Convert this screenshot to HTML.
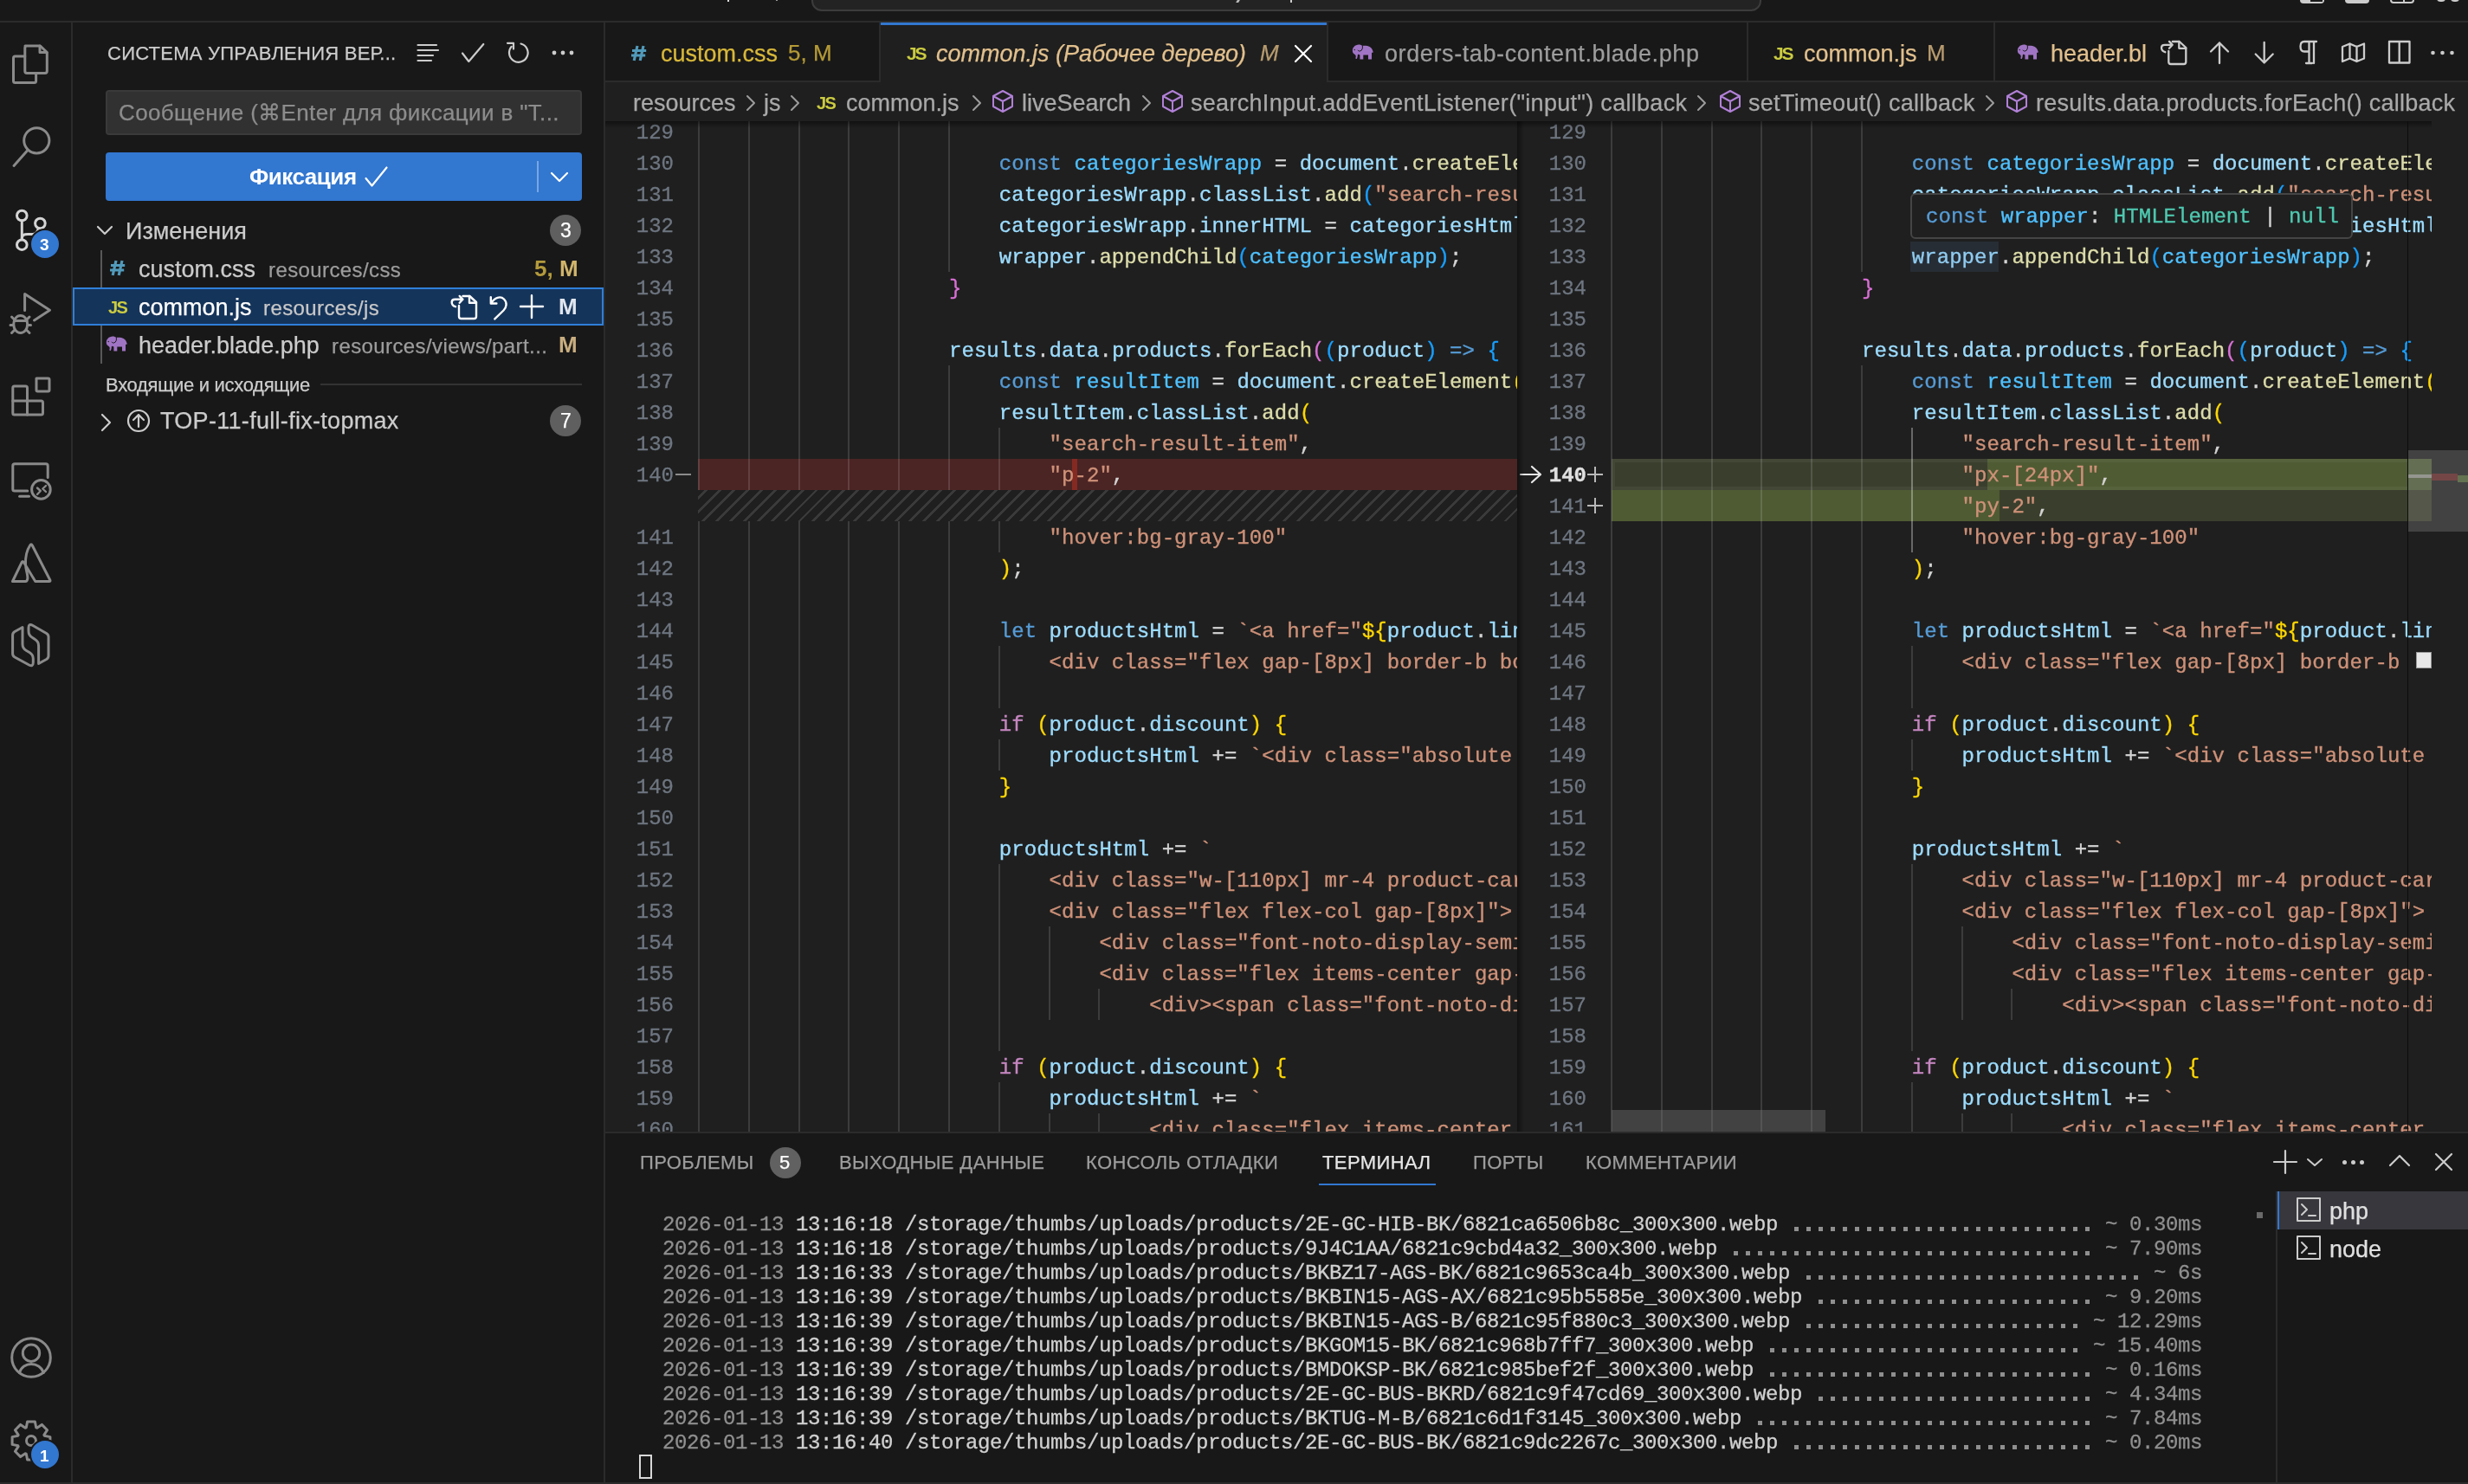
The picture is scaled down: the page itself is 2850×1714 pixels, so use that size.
<!DOCTYPE html><html><head><meta charset="utf-8"><style>
html,body{margin:0;padding:0;width:2850px;height:1714px;overflow:hidden;background:#181818;}
*{box-sizing:border-box;}
.c{position:absolute;overflow:hidden;}
</style></head><body><div style="position:absolute;left:0;top:0;width:2850px;height:1714px;overflow:hidden;background:#181818;will-change:transform;">
<div style="position:absolute;left:0px;top:0px;width:2850px;height:24px;background:#181818;"></div>
<div style="position:absolute;left:0px;top:24px;width:2850px;height:2px;background:#2b2b2b;"></div>
<div style="position:absolute;left:937px;top:-20px;width:1097px;height:33px;background:#232323;border:2px solid #3c3c3c;border-radius:12px;"></div>
<div style="position:absolute;left:1428px;top:0px;width:3px;height:3px;background:#bbbbbb;transform:skewX(-30deg);"></div>
<div style="position:absolute;left:1490px;top:0px;width:2px;height:3px;background:#cccccc;"></div>
<div style="position:absolute;left:840px;top:0px;width:2px;height:2px;background:#dddddd;"></div>
<div style="position:absolute;left:896px;top:0px;width:2px;height:1px;background:#999999;"></div>
<div style="position:absolute;left:2656px;top:-20px;width:28px;height:24px;background:#cccccc;border-radius:4px;"></div>
<div style="position:absolute;left:2668px;top:-20px;width:14px;height:21.5px;background:#181818;"></div>
<div style="position:absolute;left:2708px;top:-20px;width:28px;height:24px;background:#cccccc;border-radius:4px;"></div>
<div style="position:absolute;left:2760px;top:-20px;width:28px;height:24px;background:transparent;border:2px solid #cccccc;border-radius:4px;"></div>
<div style="position:absolute;left:2775px;top:-20px;width:2px;height:22px;background:#cccccc;"></div>
<div style="position:absolute;left:2814px;top:-6px;width:10px;height:8px;background:#cccccc;border-radius:4px;"></div>
<div style="position:absolute;left:2830px;top:-6px;width:10px;height:8px;background:#cccccc;border-radius:4px;"></div>
<div style="position:absolute;left:0px;top:26px;width:82px;height:1686px;background:#181818;"></div>
<div style="position:absolute;left:82px;top:26px;width:2px;height:1686px;background:#2b2b2b;"></div>
<svg style="position:absolute;left:0px;top:30px" width="82" height="80" viewBox="0 30 82 80"><path d="M29 53 H46.5 L54.3 60.5 V82 Q54.3 84.4 52 84.4 H31 Q28.8 84.4 28.8 82 V55.5 Q28.8 53 31 53 Z" fill="none" stroke="#8a8a8a" stroke-width="3.0" stroke-linejoin="round" stroke-linecap="round" /><path d="M46 53 V60.5 H54" fill="none" stroke="#8a8a8a" stroke-width="3.0" stroke-linejoin="round" stroke-linecap="round" /><path d="M28.8 65 H17.5 Q15.5 65 15.5 67 V93.5 Q15.5 95.6 17.5 95.6 H39.5 Q41.6 95.6 41.6 93.5 V84.4" fill="none" stroke="#8a8a8a" stroke-width="3.0" stroke-linejoin="round" stroke-linecap="round" /></svg>
<svg style="position:absolute;left:0px;top:130px" width="82" height="80" viewBox="0 130 82 80"><path d="M42.3 162.3 m-14.6 0 a14.6 14.6 0 1 0 29.2 0 a14.6 14.6 0 1 0 -29.2 0" fill="none" stroke="#8a8a8a" stroke-width="3.0" stroke-linejoin="round" stroke-linecap="round" /><path d="M31.5 174 L16 191.5" fill="none" stroke="#8a8a8a" stroke-width="3.0" stroke-linejoin="round" stroke-linecap="round" stroke-linecap="butt"/></svg>
<svg style="position:absolute;left:0px;top:225px" width="82" height="80" viewBox="0 225 82 80"><path d="M25.3 249 m-5.8 0 a5.8 5.8 0 1 0 11.6 0 a5.8 5.8 0 1 0 -11.6 0" fill="none" stroke="#d4d4d4" stroke-width="3.0" stroke-linejoin="round" stroke-linecap="round" /><path d="M46.4 258 m-5.8 0 a5.8 5.8 0 1 0 11.6 0 a5.8 5.8 0 1 0 -11.6 0" fill="none" stroke="#d4d4d4" stroke-width="3.0" stroke-linejoin="round" stroke-linecap="round" /><path d="M25.3 282.7 m-5.8 0 a5.8 5.8 0 1 0 11.6 0 a5.8 5.8 0 1 0 -11.6 0" fill="none" stroke="#d4d4d4" stroke-width="3.0" stroke-linejoin="round" stroke-linecap="round" /><path d="M25.3 255 V276.5" fill="none" stroke="#d4d4d4" stroke-width="3.0" stroke-linejoin="round" stroke-linecap="round" /><path d="M25.3 276 C25.3 271 28 270.5 32 270.5 H38 C41 270.5 43 269 44.5 263.5" fill="none" stroke="#d4d4d4" stroke-width="3.0" stroke-linejoin="round" stroke-linecap="round" /></svg>
<div style="position:absolute;left:34px;top:264px;width:36px;height:36px;border-radius:18px;background:#3277d0;border:2px solid #181818;"></div>
<div style="position:absolute;left:46px;top:270.91px;height:23px;line-height:23px;font-family:'Liberation Sans', sans-serif;font-size:19px;color:#ffffff;font-weight:700;white-space:pre;-webkit-text-stroke:0px;">3</div>
<svg style="position:absolute;left:0px;top:320px" width="82" height="80" viewBox="0 320 82 80"><path d="M28.6 358.5 V339.5 L57.5 358.3 L39.5 370" fill="none" stroke="#8a8a8a" stroke-width="3.0" stroke-linejoin="round" stroke-linecap="round" stroke-linecap="butt"/><path d="M23.7 374.5 m-8 0 a8 10 0 1 0 16 0 a8 10 0 1 0 -16 0" fill="none" stroke="#8a8a8a" stroke-width="3.0" stroke-linejoin="round" stroke-linecap="round" /><path d="M16.5 370.5 H31 M13.5 366 L17 369.5 M34 366 L30.5 369.5 M12 375.5 H15.5 M32 375.5 H35.5 M13.5 384.5 L17 381 M34 384.5 L30.5 381" fill="none" stroke="#8a8a8a" stroke-width="3.0" stroke-linejoin="round" stroke-linecap="round" stroke-linecap="butt"/></svg>
<svg style="position:absolute;left:0px;top:420px" width="82" height="80" viewBox="0 420 82 80"><path d="M42 437 H55.5 Q57 437 57 438.5 V450.5 Q57 452 55.5 452 H43.5 Q42 452 42 450.5 Z" fill="none" stroke="#8a8a8a" stroke-width="3.0" stroke-linejoin="round" stroke-linecap="round" /><path d="M16.5 446 H29.5 Q31.5 446 31.5 448 V463 H47.5 Q49.5 463 49.5 465 V477 Q49.5 479 47.5 479 H16.5 Q14.8 479 14.8 477 V448 Q14.8 446 16.5 446 Z" fill="none" stroke="#8a8a8a" stroke-width="3.0" stroke-linejoin="round" stroke-linecap="round" /><path d="M14.8 463 H31.5 V479" fill="none" stroke="#8a8a8a" stroke-width="3.0" stroke-linejoin="round" stroke-linecap="round" /></svg>
<svg style="position:absolute;left:0px;top:515px" width="82" height="80" viewBox="0 515 82 80"><path d="M31.8 567 H17 Q14.8 567 14.8 565 V538 Q14.8 535.8 17 535.8 H53 Q55.2 535.8 55.2 538 V551.5" fill="none" stroke="#8a8a8a" stroke-width="3.0" stroke-linejoin="round" stroke-linecap="round" stroke-linecap="butt"/><path d="M22.6 573.2 H33.5" fill="none" stroke="#8a8a8a" stroke-width="3.0" stroke-linejoin="round" stroke-linecap="round" stroke-linecap="butt"/><path d="M47.4 565.4 m-10.8 0 a10.8 10.8 0 1 0 21.6 0 a10.8 10.8 0 1 0 -21.6 0" fill="none" stroke="#8a8a8a" stroke-width="3.0" stroke-linejoin="round" stroke-linecap="round" /><path d="M43 563.5 L46.8 567 L43 571 M53 561 L49.3 564.5 L53 568" fill="none" stroke="#8a8a8a" stroke-width="2.4" stroke-linejoin="round" stroke-linecap="round" stroke-linecap="butt"/></svg>
<svg style="position:absolute;left:0px;top:610px" width="82" height="80" viewBox="0 610 82 80"><path d="M14.5 671.5 L25.2 649.3 Q26.2 647.5 27.3 649.3 L40.8 671.5 H56.8 Q58.5 671.5 57.8 670 L37.3 630 Q36 627.5 34.6 630 C30 637 29.2 644 29.5 652 C29.8 659 32.5 664 31.8 668.5 Q31.3 671.5 29.5 671.5 Z" fill="none" stroke="#8a8a8a" stroke-width="3.0" stroke-linejoin="round" stroke-linecap="round" /></svg>
<svg style="position:absolute;left:0px;top:705px" width="82" height="80" viewBox="0 705 82 80"><path d="M26 724.5 L17 729.5 Q14.6 731 14.6 733.5 V755 Q14.6 757.5 17 759 L33.5 768 Q38.3 770.5 38.3 765 V761 Q38.3 756 34 753.5 L30.5 751.5 Q26 749 26 744 Z" fill="none" stroke="#8a8a8a" stroke-width="3.0" stroke-linejoin="round" stroke-linecap="round" /><path d="M44.6 766.5 L53.6 761.5 Q56 760 56 757.5 V735.5 Q56 733 53.6 731.5 L38 722.5 Q33 719.5 33 725 V729 Q33 734 37.5 736.5 L40.5 738.5 Q44.6 741 44.6 746 Z" fill="none" stroke="#8a8a8a" stroke-width="3.0" stroke-linejoin="round" stroke-linecap="round" /></svg>
<svg style="position:absolute;left:0px;top:1530px" width="82" height="80" viewBox="0 1530 82 80"><path d="M36 1568 m-22.3 0 a22.3 22.3 0 1 0 44.6 0 a22.3 22.3 0 1 0 -44.6 0" fill="none" stroke="#8a8a8a" stroke-width="3.0" stroke-linejoin="round" stroke-linecap="round" /><path d="M36 1562.7 m-9.7 0 a9.7 9.7 0 1 0 19.4 0 a9.7 9.7 0 1 0 -19.4 0" fill="none" stroke="#8a8a8a" stroke-width="3.0" stroke-linejoin="round" stroke-linecap="round" /><path d="M22.4 1585.5 C26 1572 46 1572 50.3 1585.5" fill="none" stroke="#8a8a8a" stroke-width="3.0" stroke-linejoin="round" stroke-linecap="round" /></svg>
<svg style="position:absolute;left:0px;top:1630px" width="82" height="80" viewBox="0 1630 82 80"><path d="M30.3 1648.8 L31.6 1642.1 L40.4 1642.1 L41.7 1648.8 L42.7 1649.2 L48.3 1645.4 L54.6 1651.7 L50.8 1657.3 L51.2 1658.3 L57.9 1659.6 L57.9 1668.4 L51.2 1669.7 L50.8 1670.7 L54.6 1676.3 L48.3 1682.6 L42.7 1678.8 L41.7 1679.2 L40.4 1685.9 L31.6 1685.9 L30.3 1679.2 L29.3 1678.8 L23.7 1682.6 L17.4 1676.3 L21.2 1670.7 L20.8 1669.7 L14.1 1668.4 L14.1 1659.6 L20.8 1658.3 L21.2 1657.3 L17.4 1651.7 L23.7 1645.4 L29.3 1649.2 Z" fill="none" stroke="#8a8a8a" stroke-width="3.0" stroke-linejoin="round" stroke-linecap="round" /><path d="M36 1664 m-5.5 0 a5.5 5.5 0 1 0 11 0 a5.5 5.5 0 1 0 -11 0" fill="none" stroke="#8a8a8a" stroke-width="3.0" stroke-linejoin="round" stroke-linecap="round" /></svg>
<div style="position:absolute;left:34px;top:1662px;width:36px;height:36px;border-radius:18px;background:#3277d0;border:2px solid #181818;"></div>
<div style="position:absolute;left:46px;top:1669.91px;height:23px;line-height:23px;font-family:'Liberation Sans', sans-serif;font-size:19px;color:#ffffff;font-weight:700;white-space:pre;-webkit-text-stroke:0px;">1</div>
<div style="position:absolute;left:84px;top:26px;width:613px;height:1686px;background:#181818;"></div>
<div style="position:absolute;left:697px;top:26px;width:2px;height:1686px;background:#2b2b2b;"></div>
<div style="position:absolute;left:124px;top:49.37px;height:26px;line-height:26px;font-family:'Liberation Sans', sans-serif;font-size:22px;color:#cccccc;font-weight:400;white-space:pre;-webkit-text-stroke:0.25px;letter-spacing:0.25px;">СИСТЕМА УПРАВЛЕНИЯ ВЕР...</div>
<svg style="position:absolute;left:470px;top:40px" width="200" height="45" viewBox="470 40 200 45"><path d="M482.5 52 H504 M482.5 58 H506 M482.5 64 H500 M482.5 70 H498" fill="none" stroke="#cccccc" stroke-width="2.2" stroke-linejoin="round" stroke-linecap="round" stroke-linecap="butt"/><path d="M534 61.5 L541.3 71 L558.3 51" fill="none" stroke="#cccccc" stroke-width="2.2" stroke-linejoin="round" stroke-linecap="round" stroke-linecap="butt"/><path d="M601.5 50.5 A10.8 10.8 0 1 1 590.7 53.8" fill="none" stroke="#cccccc" stroke-width="2.2" stroke-linejoin="round" stroke-linecap="round" stroke-linecap="butt"/><path d="M586 49.8 H593 V56.6" fill="none" stroke="#cccccc" stroke-width="2.2" stroke-linejoin="round" stroke-linecap="round" stroke-linecap="butt"/><circle cx="640" cy="61" r="2.4" fill="#cccccc"/><circle cx="650" cy="61" r="2.4" fill="#cccccc"/><circle cx="660" cy="61" r="2.4" fill="#cccccc"/></svg>
<div style="position:absolute;left:122px;top:104px;width:550px;height:52px;background:#313131;border-radius:4px;border:2px solid #3a3a3a;"></div>
<div style="position:absolute;left:137px;top:115.48px;height:31px;line-height:31px;font-family:'Liberation Sans', sans-serif;font-size:26px;color:#8c8c8c;font-weight:400;white-space:pre;-webkit-text-stroke:0.25px;letter-spacing:0.35px;">Сообщение (⌘Enter для фиксации в "T...</div>
<div style="position:absolute;left:122px;top:176px;width:550px;height:56px;background:#3277d0;border-radius:4px;"></div>
<div style="position:absolute;left:288px;top:189.48px;height:31px;line-height:31px;font-family:'Liberation Sans', sans-serif;font-size:26px;color:#ffffff;font-weight:700;white-space:pre;-webkit-text-stroke:0px;letter-spacing:-0.45px;">Фиксация</div>
<svg style="position:absolute;left:415px;top:185px" width="40" height="40" viewBox="415 185 40 40"><path d="M422.5 206 L429.5 214.5 L446.5 193.5" fill="none" stroke="#ffffff" stroke-width="2.2" stroke-linejoin="round" stroke-linecap="round" stroke-linecap="butt"/></svg>
<div style="position:absolute;left:620px;top:186px;width:2px;height:36px;background:#7aa6e2;"></div>
<svg style="position:absolute;left:634px;top:196px;" width="26" height="18" viewBox="0 0 26 18"><path d="M3 4 L12 13 L21 4" fill="none" stroke="#ffffff" stroke-width="2.2" stroke-linejoin="round" stroke-linecap="round" /></svg>
<svg style="position:absolute;left:110px;top:258px;" width="24" height="18" viewBox="0 0 24 18"><path d="M3 4 L11 12 L19 4" fill="none" stroke="#cccccc" stroke-width="2.2" stroke-linejoin="round" stroke-linecap="round" /></svg>
<div style="position:absolute;left:145px;top:250.64px;height:32px;line-height:32px;font-family:'Liberation Sans', sans-serif;font-size:27px;color:#cccccc;font-weight:400;white-space:pre;-webkit-text-stroke:0.25px;">Изменения</div>
<div style="position:absolute;left:635px;top:248px;width:36px;height:36px;border-radius:18px;background:#5f5f5f;"></div>
<div style="position:absolute;left:647px;top:251.52px;height:28px;line-height:28px;font-family:'Liberation Sans', sans-serif;font-size:23px;color:#ffffff;font-weight:400;white-space:pre;-webkit-text-stroke:0.25px;">3</div>
<div style="position:absolute;left:116px;top:289px;width:2px;height:131px;background:#585858;"></div>
<svg style="position:absolute;left:124px;top:298px" width="24" height="24" viewBox="124 298 24 24"><path d="M134.0 301L130.2 318 M141.0 301L137.2 318 M128.0 306.5H144.2 M127.0 312H143.2" stroke="#519aba" stroke-width="3.2" fill="none"/></svg>
<div style="position:absolute;left:160px;top:294.64px;height:32px;line-height:32px;font-family:'Liberation Sans', sans-serif;font-size:27px;color:#cccccc;font-weight:400;white-space:pre;-webkit-text-stroke:0.25px;">custom.css</div>
<div style="position:absolute;left:310px;top:297.18px;height:29px;line-height:29px;font-family:'Liberation Sans', sans-serif;font-size:24px;color:#9d9d9d;font-weight:400;white-space:pre;-webkit-text-stroke:0.25px;letter-spacing:0.4px;">resources/css</div>
<div style="position:absolute;left:617px;top:295.48px;height:31px;line-height:31px;font-family:'Liberation Sans', sans-serif;font-size:26px;color:#b39a3c;font-weight:700;white-space:pre;-webkit-text-stroke:0px;">5, <span style="color:#d0b46a">M</span></div>
<div style="position:absolute;left:84px;top:332px;width:613px;height:44px;background:#15345a;border:2px solid #2f7fd8;"></div>
<div style="position:absolute;left:125px;top:343.06px;height:24px;line-height:24px;font-family:'Liberation Sans', sans-serif;font-size:20px;color:#cbcb41;font-weight:700;white-space:pre;-webkit-text-stroke:0px;letter-spacing:-1.6px;">JS</div>
<div style="position:absolute;left:160px;top:338.64px;height:32px;line-height:32px;font-family:'Liberation Sans', sans-serif;font-size:27px;color:#ffffff;font-weight:400;white-space:pre;-webkit-text-stroke:0.25px;">common.js</div>
<div style="position:absolute;left:304px;top:341.18px;height:29px;line-height:29px;font-family:'Liberation Sans', sans-serif;font-size:24px;color:#c8c8c8;font-weight:400;white-space:pre;-webkit-text-stroke:0.25px;letter-spacing:0.4px;">resources/js</div>
<svg style="position:absolute;left:510px;top:335px" width="170" height="40" viewBox="510 335 170 40"><path d="M530 353 V365.5 Q530 368 532.5 368 H547.5 Q550 368 550 365.5 V349 L542.4 342 H534.5" fill="none" stroke="#ffffff" stroke-width="2.4" stroke-linejoin="round" stroke-linecap="round" stroke-linecap="butt"/><path d="M542 342 V349.8 H550" fill="none" stroke="#ffffff" stroke-width="2.4" stroke-linejoin="round" stroke-linecap="round" stroke-linecap="butt"/><path d="M526 354.2 Q521.7 353 521.7 349 Q521.7 345.8 525.5 345.8 H534.4 M530.7 341.9 L534.4 345.8 L530.7 349.8" fill="none" stroke="#ffffff" stroke-width="2.4" stroke-linejoin="round" stroke-linecap="round" stroke-linecap="butt"/><path d="M566.8 343.3 V350.5 H573.4" fill="none" stroke="#ffffff" stroke-width="2.4" stroke-linejoin="round" stroke-linecap="round" stroke-linecap="butt"/><path d="M567.5 350 C571 343.5 578 341.5 582 345.5 C586 349.5 585 355 581.5 358.5 L571.3 368.4" fill="none" stroke="#ffffff" stroke-width="2.4" stroke-linejoin="round" stroke-linecap="round" stroke-linecap="butt"/><path d="M614 341.2 V367 M601 354 H627" fill="none" stroke="#ffffff" stroke-width="2.4" stroke-linejoin="round" stroke-linecap="round" stroke-linecap="butt"/></svg>
<div style="position:absolute;left:645px;top:339.48px;height:31px;line-height:31px;font-family:'Liberation Sans', sans-serif;font-size:26px;color:#e0e6ee;font-weight:700;white-space:pre;-webkit-text-stroke:0px;">M</div>
<svg style="position:absolute;left:122px;top:388px;" width="26" height="19" viewBox="0 0 26 19"><path d="M1 9 C0 4 4 0.5 8 0.5 C10 0.5 11.5 1.2 12.3 2 C13.5 1.6 16 1.6 18 2 C22 2.8 24 6 24.5 8.5 L25 9.3 L23 10 V17.4 H19 V12.6 C17 12.3 15 12.3 13.3 12.6 V17.4 H9.4 V12.5 C8.5 12.2 7.5 11.5 7 12 C6.5 13 7 14.5 6 16.5 C5.5 17.5 4 17 4.5 15.5 C5 14 5 13 3 11.5 C2 10.8 1.3 10.3 1 9 Z" fill="#a074c4"/><path d="M12.3 2 C12.8 4.5 12 7.5 9.5 8 C8.5 8.2 7.5 7.6 6.8 6.8" fill="none" stroke="#181818" stroke-width="1"/><circle cx="3.2" cy="6.5" r="0.7" fill="#181818"/></svg>
<div style="position:absolute;left:160px;top:382.64px;height:32px;line-height:32px;font-family:'Liberation Sans', sans-serif;font-size:27px;color:#cccccc;font-weight:400;white-space:pre;-webkit-text-stroke:0.25px;">header.blade.php</div>
<div style="position:absolute;left:383px;top:385.18px;height:29px;line-height:29px;font-family:'Liberation Sans', sans-serif;font-size:24px;color:#9d9d9d;font-weight:400;white-space:pre;-webkit-text-stroke:0.25px;letter-spacing:0.4px;">resources/views/part...</div>
<div style="position:absolute;left:645px;top:383.48px;height:31px;line-height:31px;font-family:'Liberation Sans', sans-serif;font-size:26px;color:#c8ad7f;font-weight:700;white-space:pre;-webkit-text-stroke:0px;">M</div>
<div style="position:absolute;left:122px;top:432.37px;height:26px;line-height:26px;font-family:'Liberation Sans', sans-serif;font-size:22px;color:#cccccc;font-weight:400;white-space:pre;-webkit-text-stroke:0.25px;letter-spacing:-0.3px;">Входящие и исходящие</div>
<div style="position:absolute;left:370px;top:443px;width:302px;height:2px;background:#333333;"></div>
<svg style="position:absolute;left:114px;top:476px;" width="18" height="24" viewBox="0 0 18 24"><path d="M4 3 L13 12 L4 21" fill="none" stroke="#cccccc" stroke-width="2.2" stroke-linejoin="round" stroke-linecap="round" /></svg>
<svg style="position:absolute;left:146px;top:472px;" width="28" height="28" viewBox="0 0 28 28"><path d="M14 14 m-12 0 a12 12 0 1 0 24 0 a12 12 0 1 0 -24 0" fill="none" stroke="#cccccc" stroke-width="2.2" stroke-linejoin="round" stroke-linecap="round" /><path d="M14 21 V8 M8 13 L14 7 L20 13" fill="none" stroke="#cccccc" stroke-width="2.2" stroke-linejoin="round" stroke-linecap="round" /></svg>
<div style="position:absolute;left:185px;top:469.64px;height:32px;line-height:32px;font-family:'Liberation Sans', sans-serif;font-size:27px;color:#cccccc;font-weight:400;white-space:pre;-webkit-text-stroke:0.25px;letter-spacing:0.3px;">TOP-11-full-fix-topmax</div>
<div style="position:absolute;left:635px;top:468px;width:36px;height:36px;border-radius:18px;background:#5f5f5f;"></div>
<div style="position:absolute;left:647px;top:471.52px;height:28px;line-height:28px;font-family:'Liberation Sans', sans-serif;font-size:23px;color:#ffffff;font-weight:400;white-space:pre;-webkit-text-stroke:0.25px;">7</div>
<div style="position:absolute;left:699px;top:26px;width:2151px;height:68px;background:#181818;"></div>
<div style="position:absolute;left:699px;top:93px;width:2151px;height:2px;background:#2b2b2b;"></div>
<svg style="position:absolute;left:726px;top:50px" width="24" height="24" viewBox="726 50 24 24"><path d="M736.0 53L732.2 70 M743.0 53L739.2 70 M730.0 58.5H746.2 M729.0 64H745.2" stroke="#519aba" stroke-width="3.2" fill="none"/></svg>
<div style="position:absolute;left:763px;top:45.64px;height:32px;line-height:32px;font-family:'Liberation Sans', sans-serif;font-size:27px;color:#d8b83a;font-weight:400;white-space:pre;-webkit-text-stroke:0.25px;">custom.css</div>
<div style="position:absolute;left:910px;top:46.48px;height:31px;line-height:31px;font-family:'Liberation Sans', sans-serif;font-size:26px;color:#b49a36;font-weight:400;white-space:pre;-webkit-text-stroke:0.25px;">5, M</div>
<div style="position:absolute;left:1015px;top:26px;width:2px;height:68px;background:#2b2b2b;"></div>
<div style="position:absolute;left:1017px;top:26px;width:515px;height:69px;background:#1f1f1f;"></div>
<div style="position:absolute;left:1017px;top:26px;width:515px;height:3px;background:#3277d0;"></div>
<div style="position:absolute;left:1047px;top:49.22px;height:25px;line-height:25px;font-family:'Liberation Sans', sans-serif;font-size:21px;color:#cbcb41;font-weight:700;white-space:pre;-webkit-text-stroke:0px;letter-spacing:-2.2px;">JS</div>
<div style="position:absolute;left:1081px;top:45.64px;height:32px;line-height:32px;font-family:'Liberation Sans', sans-serif;font-size:27px;color:#e2c08d;font-weight:400;white-space:pre;-webkit-text-stroke:0.25px;font-style:italic;">common.js (Рабочее дерево)</div>
<div style="position:absolute;left:1455px;top:46.48px;height:31px;line-height:31px;font-family:'Liberation Sans', sans-serif;font-size:26px;color:#b89c6f;font-weight:400;white-space:pre;-webkit-text-stroke:0.25px;font-style:italic;">M</div>
<svg style="position:absolute;left:1493px;top:50px;" width="24" height="24" viewBox="0 0 24 24"><path d="M3 3 L21 21 M21 3 L3 21" fill="none" stroke="#ffffff" stroke-width="2.2" stroke-linejoin="round" stroke-linecap="round" /></svg>
<div style="position:absolute;left:1532px;top:26px;width:2px;height:68px;background:#2b2b2b;"></div>
<svg style="position:absolute;left:1561px;top:51px;" width="26" height="19" viewBox="0 0 26 19"><path d="M1 9 C0 4 4 0.5 8 0.5 C10 0.5 11.5 1.2 12.3 2 C13.5 1.6 16 1.6 18 2 C22 2.8 24 6 24.5 8.5 L25 9.3 L23 10 V17.4 H19 V12.6 C17 12.3 15 12.3 13.3 12.6 V17.4 H9.4 V12.5 C8.5 12.2 7.5 11.5 7 12 C6.5 13 7 14.5 6 16.5 C5.5 17.5 4 17 4.5 15.5 C5 14 5 13 3 11.5 C2 10.8 1.3 10.3 1 9 Z" fill="#a074c4"/><path d="M12.3 2 C12.8 4.5 12 7.5 9.5 8 C8.5 8.2 7.5 7.6 6.8 6.8" fill="none" stroke="#181818" stroke-width="1"/><circle cx="3.2" cy="6.5" r="0.7" fill="#181818"/></svg>
<div style="position:absolute;left:1599px;top:45.64px;height:32px;line-height:32px;font-family:'Liberation Sans', sans-serif;font-size:27px;color:#9d9d9d;font-weight:400;white-space:pre;-webkit-text-stroke:0.25px;letter-spacing:0.6px;">orders-tab-content.blade.php</div>
<div style="position:absolute;left:2017px;top:26px;width:2px;height:68px;background:#2b2b2b;"></div>
<div style="position:absolute;left:2048px;top:49.22px;height:25px;line-height:25px;font-family:'Liberation Sans', sans-serif;font-size:21px;color:#cbcb41;font-weight:700;white-space:pre;-webkit-text-stroke:0px;letter-spacing:-2.2px;">JS</div>
<div style="position:absolute;left:2083px;top:45.64px;height:32px;line-height:32px;font-family:'Liberation Sans', sans-serif;font-size:27px;color:#e2c08d;font-weight:400;white-space:pre;-webkit-text-stroke:0.25px;">common.js</div>
<div style="position:absolute;left:2225px;top:46.48px;height:31px;line-height:31px;font-family:'Liberation Sans', sans-serif;font-size:26px;color:#b89c6f;font-weight:400;white-space:pre;-webkit-text-stroke:0.25px;">M</div>
<div style="position:absolute;left:2302px;top:26px;width:2px;height:68px;background:#2b2b2b;"></div>
<svg style="position:absolute;left:2329px;top:51px;" width="26" height="19" viewBox="0 0 26 19"><path d="M1 9 C0 4 4 0.5 8 0.5 C10 0.5 11.5 1.2 12.3 2 C13.5 1.6 16 1.6 18 2 C22 2.8 24 6 24.5 8.5 L25 9.3 L23 10 V17.4 H19 V12.6 C17 12.3 15 12.3 13.3 12.6 V17.4 H9.4 V12.5 C8.5 12.2 7.5 11.5 7 12 C6.5 13 7 14.5 6 16.5 C5.5 17.5 4 17 4.5 15.5 C5 14 5 13 3 11.5 C2 10.8 1.3 10.3 1 9 Z" fill="#a074c4"/><path d="M12.3 2 C12.8 4.5 12 7.5 9.5 8 C8.5 8.2 7.5 7.6 6.8 6.8" fill="none" stroke="#181818" stroke-width="1"/><circle cx="3.2" cy="6.5" r="0.7" fill="#181818"/></svg>
<div style="position:absolute;left:2368px;top:45.64px;height:32px;line-height:32px;font-family:'Liberation Sans', sans-serif;font-size:27px;color:#e2c08d;font-weight:400;white-space:pre;-webkit-text-stroke:0.25px;">header.bl</div>
<div style="position:absolute;left:2480px;top:26px;width:370px;height:67px;background:#181818;"></div>
<svg style="position:absolute;left:2480px;top:26px" width="370" height="67" viewBox="2480 26 370 67"><g transform="translate(1974.3 -294)"><path d="M530 353 V365.5 Q530 368 532.5 368 H547.5 Q550 368 550 365.5 V349 L542.4 342 H534.5" fill="none" stroke="#cccccc" stroke-width="2.3" stroke-linejoin="round" stroke-linecap="round" stroke-linecap="butt"/><path d="M542 342 V349.8 H550" fill="none" stroke="#cccccc" stroke-width="2.3" stroke-linejoin="round" stroke-linecap="round" stroke-linecap="butt"/><path d="M526 354.2 Q521.7 353 521.7 349 Q521.7 345.8 525.5 345.8 H534.4 M530.7 341.9 L534.4 345.8 L530.7 349.8" fill="none" stroke="#cccccc" stroke-width="2.3" stroke-linejoin="round" stroke-linecap="round" stroke-linecap="butt"/></g><path d="M2563 73 V49.5 M2553 59.5 L2563 49.5 L2573 59.5" fill="none" stroke="#cccccc" stroke-width="2.3" stroke-linejoin="round" stroke-linecap="round" stroke-linecap="butt"/><path d="M2614.7 49 V72.5 M2604.7 62.5 L2614.7 72.5 L2624.7 62.5" fill="none" stroke="#cccccc" stroke-width="2.3" stroke-linejoin="round" stroke-linecap="round" stroke-linecap="butt"/><path d="M2675 48 H2661 Q2656.5 48 2656.5 53.5 Q2656.5 59.5 2661 59.5 H2666.5 M2666.5 48 V73 M2672 48 V73 M2663 73 H2670" fill="none" stroke="#cccccc" stroke-width="2.3" stroke-linejoin="round" stroke-linecap="round" stroke-linecap="butt"/><path d="M2705 54 L2713.5 50.5 L2721.5 54 L2730 50.5 V67.5 L2721.5 71 L2713.5 67.5 L2705 71 Z M2713.5 50.5 V67.5 M2721.5 54 V71" fill="none" stroke="#cccccc" stroke-width="2.3" stroke-linejoin="round" stroke-linecap="round" /><path d="M2759 48 H2782.5 V72.5 H2759 Z M2770.7 48 V72.5" fill="none" stroke="#cccccc" stroke-width="2.3" stroke-linejoin="round" stroke-linecap="round" stroke-linejoin="miter"/><circle cx="2809.5" cy="61" r="2.3" fill="#cccccc"/><circle cx="2820.5" cy="61" r="2.3" fill="#cccccc"/><circle cx="2831.5" cy="61" r="2.3" fill="#cccccc"/></svg>
<div style="position:absolute;left:699px;top:95px;width:2151px;height:45px;background:#1f1f1f;"></div>
<div style="position:absolute;left:731px;top:102.64px;height:32px;line-height:32px;font-family:'Liberation Sans', sans-serif;font-size:27px;color:#a9a9a9;font-weight:400;white-space:pre;-webkit-text-stroke:0.25px;">resources</div>
<svg style="position:absolute;left:860px;top:108px;" width="14" height="22" viewBox="0 0 14 22"><path d="M3 3 L11 11 L3 19" fill="none" stroke="#9d9d9d" stroke-width="2" stroke-linejoin="round" stroke-linecap="round" /></svg>
<div style="position:absolute;left:882px;top:102.64px;height:32px;line-height:32px;font-family:'Liberation Sans', sans-serif;font-size:27px;color:#a9a9a9;font-weight:400;white-space:pre;-webkit-text-stroke:0.25px;">js</div>
<svg style="position:absolute;left:911px;top:108px;" width="14" height="22" viewBox="0 0 14 22"><path d="M3 3 L11 11 L3 19" fill="none" stroke="#9d9d9d" stroke-width="2" stroke-linejoin="round" stroke-linecap="round" /></svg>
<div style="position:absolute;left:943px;top:107.06px;height:24px;line-height:24px;font-family:'Liberation Sans', sans-serif;font-size:20px;color:#cbcb41;font-weight:700;white-space:pre;-webkit-text-stroke:0px;letter-spacing:-1.6px;">JS</div>
<div style="position:absolute;left:977px;top:102.64px;height:32px;line-height:32px;font-family:'Liberation Sans', sans-serif;font-size:27px;color:#a9a9a9;font-weight:400;white-space:pre;-webkit-text-stroke:0.25px;">common.js</div>
<svg style="position:absolute;left:1121px;top:108px;" width="14" height="22" viewBox="0 0 14 22"><path d="M3 3 L11 11 L3 19" fill="none" stroke="#9d9d9d" stroke-width="2" stroke-linejoin="round" stroke-linecap="round" /></svg>
<svg style="position:absolute;left:1145px;top:103px;" width="26" height="28" viewBox="0 0 26 28"><path d="M13 2 L24 8 V20 L13 26 L2 20 V8 Z M2 8 L13 14 L24 8 M13 14 V26" fill="none" stroke="#b180d7" stroke-width="2" stroke-linejoin="round" stroke-linecap="round" /></svg>
<div style="position:absolute;left:1180px;top:102.64px;height:32px;line-height:32px;font-family:'Liberation Sans', sans-serif;font-size:27px;color:#a9a9a9;font-weight:400;white-space:pre;-webkit-text-stroke:0.25px;">liveSearch</div>
<svg style="position:absolute;left:1317px;top:108px;" width="14" height="22" viewBox="0 0 14 22"><path d="M3 3 L11 11 L3 19" fill="none" stroke="#9d9d9d" stroke-width="2" stroke-linejoin="round" stroke-linecap="round" /></svg>
<svg style="position:absolute;left:1341px;top:103px;" width="26" height="28" viewBox="0 0 26 28"><path d="M13 2 L24 8 V20 L13 26 L2 20 V8 Z M2 8 L13 14 L24 8 M13 14 V26" fill="none" stroke="#b180d7" stroke-width="2" stroke-linejoin="round" stroke-linecap="round" /></svg>
<div style="position:absolute;left:1375px;top:102.64px;height:32px;line-height:32px;font-family:'Liberation Sans', sans-serif;font-size:27px;color:#a9a9a9;font-weight:400;white-space:pre;-webkit-text-stroke:0.25px;letter-spacing:0.3px;">searchInput.addEventListener("input") callback</div>
<svg style="position:absolute;left:1958px;top:108px;" width="14" height="22" viewBox="0 0 14 22"><path d="M3 3 L11 11 L3 19" fill="none" stroke="#9d9d9d" stroke-width="2" stroke-linejoin="round" stroke-linecap="round" /></svg>
<svg style="position:absolute;left:1985px;top:103px;" width="26" height="28" viewBox="0 0 26 28"><path d="M13 2 L24 8 V20 L13 26 L2 20 V8 Z M2 8 L13 14 L24 8 M13 14 V26" fill="none" stroke="#b180d7" stroke-width="2" stroke-linejoin="round" stroke-linecap="round" /></svg>
<div style="position:absolute;left:2019px;top:102.64px;height:32px;line-height:32px;font-family:'Liberation Sans', sans-serif;font-size:27px;color:#a9a9a9;font-weight:400;white-space:pre;-webkit-text-stroke:0.25px;letter-spacing:0.3px;">setTimeout() callback</div>
<svg style="position:absolute;left:2291px;top:108px;" width="14" height="22" viewBox="0 0 14 22"><path d="M3 3 L11 11 L3 19" fill="none" stroke="#9d9d9d" stroke-width="2" stroke-linejoin="round" stroke-linecap="round" /></svg>
<svg style="position:absolute;left:2316px;top:103px;" width="26" height="28" viewBox="0 0 26 28"><path d="M13 2 L24 8 V20 L13 26 L2 20 V8 Z M2 8 L13 14 L24 8 M13 14 V26" fill="none" stroke="#b180d7" stroke-width="2" stroke-linejoin="round" stroke-linecap="round" /></svg>
<div style="position:absolute;left:2351px;top:102.64px;height:32px;line-height:32px;font-family:'Liberation Sans', sans-serif;font-size:27px;color:#a9a9a9;font-weight:400;white-space:pre;-webkit-text-stroke:0.25px;letter-spacing:0.25px;">results.data.products.forEach() callback</div>
<div style="position:absolute;left:699px;top:140px;width:2151px;height:1167px;background:#1f1f1f;"></div>
<div class="c" style="left:699px;top:140px;width:1053px;height:1167px;">
<div style="position:absolute;left:107.0px;top:-6px;width:2px;height:36px;background:rgba(255,255,255,0.13);"></div>
<div style="position:absolute;left:164.8px;top:-6px;width:2px;height:36px;background:rgba(255,255,255,0.13);"></div>
<div style="position:absolute;left:222.6px;top:-6px;width:2px;height:36px;background:rgba(255,255,255,0.13);"></div>
<div style="position:absolute;left:280.4px;top:-6px;width:2px;height:36px;background:rgba(255,255,255,0.13);"></div>
<div style="position:absolute;left:338.2px;top:-6px;width:2px;height:36px;background:rgba(255,255,255,0.13);"></div>
<div style="position:absolute;left:396.0px;top:-6px;width:2px;height:36px;background:rgba(255,255,255,0.13);"></div>
<div style="position:absolute;left:19px;top:-6px;width:60px;height:36px;line-height:36px;text-align:right;font-family:'Liberation Mono', monospace;font-size:24px;color:#6e7681;font-weight:400;white-space:pre;padding-top:2px;-webkit-text-stroke:0.3px;">129</div>
<div style="position:absolute;left:107.0px;top:30px;width:2px;height:36px;background:rgba(255,255,255,0.13);"></div>
<div style="position:absolute;left:164.8px;top:30px;width:2px;height:36px;background:rgba(255,255,255,0.13);"></div>
<div style="position:absolute;left:222.6px;top:30px;width:2px;height:36px;background:rgba(255,255,255,0.13);"></div>
<div style="position:absolute;left:280.4px;top:30px;width:2px;height:36px;background:rgba(255,255,255,0.13);"></div>
<div style="position:absolute;left:338.2px;top:30px;width:2px;height:36px;background:rgba(255,255,255,0.13);"></div>
<div style="position:absolute;left:396.0px;top:30px;width:2px;height:36px;background:rgba(255,255,255,0.13);"></div>
<div style="position:absolute;left:19px;top:30px;width:60px;height:36px;line-height:36px;text-align:right;font-family:'Liberation Mono', monospace;font-size:24px;color:#6e7681;font-weight:400;white-space:pre;padding-top:2px;-webkit-text-stroke:0.3px;">130</div>
<div style="position:absolute;left:454.8px;top:30px;height:36px;line-height:36px;font-family:'Liberation Mono', monospace;font-size:24px;letter-spacing:0.048px;white-space:pre;padding-top:2px;-webkit-text-stroke:0.35px;"><span style="color:#569cd6">const</span><span style="color:#d4d4d4"> </span><span style="color:#4fc1ff">categoriesWrapp</span><span style="color:#d4d4d4"> = </span><span style="color:#9cdcfe">document</span><span style="color:#d4d4d4">.</span><span style="color:#dcdcaa">createElement</span><span style="color:#179fff">(</span><span style="color:#ce9178">"div"</span><span style="color:#d4d4d4">);</span></div>
<div style="position:absolute;left:107.0px;top:66px;width:2px;height:36px;background:rgba(255,255,255,0.13);"></div>
<div style="position:absolute;left:164.8px;top:66px;width:2px;height:36px;background:rgba(255,255,255,0.13);"></div>
<div style="position:absolute;left:222.6px;top:66px;width:2px;height:36px;background:rgba(255,255,255,0.13);"></div>
<div style="position:absolute;left:280.4px;top:66px;width:2px;height:36px;background:rgba(255,255,255,0.13);"></div>
<div style="position:absolute;left:338.2px;top:66px;width:2px;height:36px;background:rgba(255,255,255,0.13);"></div>
<div style="position:absolute;left:396.0px;top:66px;width:2px;height:36px;background:rgba(255,255,255,0.13);"></div>
<div style="position:absolute;left:19px;top:66px;width:60px;height:36px;line-height:36px;text-align:right;font-family:'Liberation Mono', monospace;font-size:24px;color:#6e7681;font-weight:400;white-space:pre;padding-top:2px;-webkit-text-stroke:0.3px;">131</div>
<div style="position:absolute;left:454.8px;top:66px;height:36px;line-height:36px;font-family:'Liberation Mono', monospace;font-size:24px;letter-spacing:0.048px;white-space:pre;padding-top:2px;-webkit-text-stroke:0.35px;"><span style="color:#9cdcfe">categoriesWrapp</span><span style="color:#d4d4d4">.</span><span style="color:#9cdcfe">classList</span><span style="color:#d4d4d4">.</span><span style="color:#dcdcaa">add</span><span style="color:#179fff">(</span><span style="color:#ce9178">"search-result-categories"</span><span style="color:#d4d4d4">);</span></div>
<div style="position:absolute;left:107.0px;top:102px;width:2px;height:36px;background:rgba(255,255,255,0.13);"></div>
<div style="position:absolute;left:164.8px;top:102px;width:2px;height:36px;background:rgba(255,255,255,0.13);"></div>
<div style="position:absolute;left:222.6px;top:102px;width:2px;height:36px;background:rgba(255,255,255,0.13);"></div>
<div style="position:absolute;left:280.4px;top:102px;width:2px;height:36px;background:rgba(255,255,255,0.13);"></div>
<div style="position:absolute;left:338.2px;top:102px;width:2px;height:36px;background:rgba(255,255,255,0.13);"></div>
<div style="position:absolute;left:396.0px;top:102px;width:2px;height:36px;background:rgba(255,255,255,0.13);"></div>
<div style="position:absolute;left:19px;top:102px;width:60px;height:36px;line-height:36px;text-align:right;font-family:'Liberation Mono', monospace;font-size:24px;color:#6e7681;font-weight:400;white-space:pre;padding-top:2px;-webkit-text-stroke:0.3px;">132</div>
<div style="position:absolute;left:454.8px;top:102px;height:36px;line-height:36px;font-family:'Liberation Mono', monospace;font-size:24px;letter-spacing:0.048px;white-space:pre;padding-top:2px;-webkit-text-stroke:0.35px;"><span style="color:#9cdcfe">categoriesWrapp</span><span style="color:#d4d4d4">.</span><span style="color:#9cdcfe">innerHTML</span><span style="color:#d4d4d4"> = </span><span style="color:#9cdcfe">categoriesHtml</span><span style="color:#d4d4d4">;</span></div>
<div style="position:absolute;left:107.0px;top:138px;width:2px;height:36px;background:rgba(255,255,255,0.13);"></div>
<div style="position:absolute;left:164.8px;top:138px;width:2px;height:36px;background:rgba(255,255,255,0.13);"></div>
<div style="position:absolute;left:222.6px;top:138px;width:2px;height:36px;background:rgba(255,255,255,0.13);"></div>
<div style="position:absolute;left:280.4px;top:138px;width:2px;height:36px;background:rgba(255,255,255,0.13);"></div>
<div style="position:absolute;left:338.2px;top:138px;width:2px;height:36px;background:rgba(255,255,255,0.13);"></div>
<div style="position:absolute;left:396.0px;top:138px;width:2px;height:36px;background:rgba(255,255,255,0.13);"></div>
<div style="position:absolute;left:19px;top:138px;width:60px;height:36px;line-height:36px;text-align:right;font-family:'Liberation Mono', monospace;font-size:24px;color:#6e7681;font-weight:400;white-space:pre;padding-top:2px;-webkit-text-stroke:0.3px;">133</div>
<div style="position:absolute;left:454.8px;top:138px;height:36px;line-height:36px;font-family:'Liberation Mono', monospace;font-size:24px;letter-spacing:0.048px;white-space:pre;padding-top:2px;-webkit-text-stroke:0.35px;"><span style="color:#9cdcfe">wrapper</span><span style="color:#d4d4d4">.</span><span style="color:#dcdcaa">appendChild</span><span style="color:#179fff">(</span><span style="color:#4fc1ff">categoriesWrapp</span><span style="color:#179fff">)</span><span style="color:#d4d4d4">;</span></div>
<div style="position:absolute;left:107.0px;top:174px;width:2px;height:36px;background:rgba(255,255,255,0.13);"></div>
<div style="position:absolute;left:164.8px;top:174px;width:2px;height:36px;background:rgba(255,255,255,0.13);"></div>
<div style="position:absolute;left:222.6px;top:174px;width:2px;height:36px;background:rgba(255,255,255,0.13);"></div>
<div style="position:absolute;left:280.4px;top:174px;width:2px;height:36px;background:rgba(255,255,255,0.13);"></div>
<div style="position:absolute;left:338.2px;top:174px;width:2px;height:36px;background:rgba(255,255,255,0.13);"></div>
<div style="position:absolute;left:19px;top:174px;width:60px;height:36px;line-height:36px;text-align:right;font-family:'Liberation Mono', monospace;font-size:24px;color:#6e7681;font-weight:400;white-space:pre;padding-top:2px;-webkit-text-stroke:0.3px;">134</div>
<div style="position:absolute;left:397.0px;top:174px;height:36px;line-height:36px;font-family:'Liberation Mono', monospace;font-size:24px;letter-spacing:0.048px;white-space:pre;padding-top:2px;-webkit-text-stroke:0.35px;"><span style="color:#da70d6">}</span></div>
<div style="position:absolute;left:107.0px;top:210px;width:2px;height:36px;background:rgba(255,255,255,0.13);"></div>
<div style="position:absolute;left:164.8px;top:210px;width:2px;height:36px;background:rgba(255,255,255,0.13);"></div>
<div style="position:absolute;left:222.6px;top:210px;width:2px;height:36px;background:rgba(255,255,255,0.13);"></div>
<div style="position:absolute;left:280.4px;top:210px;width:2px;height:36px;background:rgba(255,255,255,0.13);"></div>
<div style="position:absolute;left:338.2px;top:210px;width:2px;height:36px;background:rgba(255,255,255,0.13);"></div>
<div style="position:absolute;left:19px;top:210px;width:60px;height:36px;line-height:36px;text-align:right;font-family:'Liberation Mono', monospace;font-size:24px;color:#6e7681;font-weight:400;white-space:pre;padding-top:2px;-webkit-text-stroke:0.3px;">135</div>
<div style="position:absolute;left:107.0px;top:246px;width:2px;height:36px;background:rgba(255,255,255,0.13);"></div>
<div style="position:absolute;left:164.8px;top:246px;width:2px;height:36px;background:rgba(255,255,255,0.13);"></div>
<div style="position:absolute;left:222.6px;top:246px;width:2px;height:36px;background:rgba(255,255,255,0.13);"></div>
<div style="position:absolute;left:280.4px;top:246px;width:2px;height:36px;background:rgba(255,255,255,0.13);"></div>
<div style="position:absolute;left:338.2px;top:246px;width:2px;height:36px;background:rgba(255,255,255,0.13);"></div>
<div style="position:absolute;left:19px;top:246px;width:60px;height:36px;line-height:36px;text-align:right;font-family:'Liberation Mono', monospace;font-size:24px;color:#6e7681;font-weight:400;white-space:pre;padding-top:2px;-webkit-text-stroke:0.3px;">136</div>
<div style="position:absolute;left:397.0px;top:246px;height:36px;line-height:36px;font-family:'Liberation Mono', monospace;font-size:24px;letter-spacing:0.048px;white-space:pre;padding-top:2px;-webkit-text-stroke:0.35px;"><span style="color:#9cdcfe">results</span><span style="color:#d4d4d4">.</span><span style="color:#9cdcfe">data</span><span style="color:#d4d4d4">.</span><span style="color:#9cdcfe">products</span><span style="color:#d4d4d4">.</span><span style="color:#dcdcaa">forEach</span><span style="color:#da70d6">(</span><span style="color:#179fff">(</span><span style="color:#9cdcfe">product</span><span style="color:#179fff">)</span><span style="color:#d4d4d4"> </span><span style="color:#569cd6">=&gt;</span><span style="color:#d4d4d4"> </span><span style="color:#179fff">{</span></div>
<div style="position:absolute;left:107.0px;top:282px;width:2px;height:36px;background:rgba(255,255,255,0.13);"></div>
<div style="position:absolute;left:164.8px;top:282px;width:2px;height:36px;background:rgba(255,255,255,0.13);"></div>
<div style="position:absolute;left:222.6px;top:282px;width:2px;height:36px;background:rgba(255,255,255,0.13);"></div>
<div style="position:absolute;left:280.4px;top:282px;width:2px;height:36px;background:rgba(255,255,255,0.13);"></div>
<div style="position:absolute;left:338.2px;top:282px;width:2px;height:36px;background:rgba(255,255,255,0.13);"></div>
<div style="position:absolute;left:396.0px;top:282px;width:2px;height:36px;background:rgba(255,255,255,0.13);"></div>
<div style="position:absolute;left:19px;top:282px;width:60px;height:36px;line-height:36px;text-align:right;font-family:'Liberation Mono', monospace;font-size:24px;color:#6e7681;font-weight:400;white-space:pre;padding-top:2px;-webkit-text-stroke:0.3px;">137</div>
<div style="position:absolute;left:454.8px;top:282px;height:36px;line-height:36px;font-family:'Liberation Mono', monospace;font-size:24px;letter-spacing:0.048px;white-space:pre;padding-top:2px;-webkit-text-stroke:0.35px;"><span style="color:#569cd6">const</span><span style="color:#d4d4d4"> </span><span style="color:#4fc1ff">resultItem</span><span style="color:#d4d4d4"> = </span><span style="color:#9cdcfe">document</span><span style="color:#d4d4d4">.</span><span style="color:#dcdcaa">createElement</span><span style="color:#ffd700">(</span><span style="color:#ce9178">"div"</span><span style="color:#d4d4d4">);</span></div>
<div style="position:absolute;left:107.0px;top:318px;width:2px;height:36px;background:rgba(255,255,255,0.13);"></div>
<div style="position:absolute;left:164.8px;top:318px;width:2px;height:36px;background:rgba(255,255,255,0.13);"></div>
<div style="position:absolute;left:222.6px;top:318px;width:2px;height:36px;background:rgba(255,255,255,0.13);"></div>
<div style="position:absolute;left:280.4px;top:318px;width:2px;height:36px;background:rgba(255,255,255,0.13);"></div>
<div style="position:absolute;left:338.2px;top:318px;width:2px;height:36px;background:rgba(255,255,255,0.13);"></div>
<div style="position:absolute;left:396.0px;top:318px;width:2px;height:36px;background:rgba(255,255,255,0.13);"></div>
<div style="position:absolute;left:19px;top:318px;width:60px;height:36px;line-height:36px;text-align:right;font-family:'Liberation Mono', monospace;font-size:24px;color:#6e7681;font-weight:400;white-space:pre;padding-top:2px;-webkit-text-stroke:0.3px;">138</div>
<div style="position:absolute;left:454.8px;top:318px;height:36px;line-height:36px;font-family:'Liberation Mono', monospace;font-size:24px;letter-spacing:0.048px;white-space:pre;padding-top:2px;-webkit-text-stroke:0.35px;"><span style="color:#9cdcfe">resultItem</span><span style="color:#d4d4d4">.</span><span style="color:#9cdcfe">classList</span><span style="color:#d4d4d4">.</span><span style="color:#dcdcaa">add</span><span style="color:#ffd700">(</span></div>
<div style="position:absolute;left:107.0px;top:354px;width:2px;height:36px;background:rgba(255,255,255,0.13);"></div>
<div style="position:absolute;left:164.8px;top:354px;width:2px;height:36px;background:rgba(255,255,255,0.13);"></div>
<div style="position:absolute;left:222.6px;top:354px;width:2px;height:36px;background:rgba(255,255,255,0.13);"></div>
<div style="position:absolute;left:280.4px;top:354px;width:2px;height:36px;background:rgba(255,255,255,0.13);"></div>
<div style="position:absolute;left:338.2px;top:354px;width:2px;height:36px;background:rgba(255,255,255,0.13);"></div>
<div style="position:absolute;left:396.0px;top:354px;width:2px;height:36px;background:rgba(255,255,255,0.13);"></div>
<div style="position:absolute;left:453.8px;top:354px;width:2px;height:36px;background:rgba(255,255,255,0.13);"></div>
<div style="position:absolute;left:19px;top:354px;width:60px;height:36px;line-height:36px;text-align:right;font-family:'Liberation Mono', monospace;font-size:24px;color:#6e7681;font-weight:400;white-space:pre;padding-top:2px;-webkit-text-stroke:0.3px;">139</div>
<div style="position:absolute;left:512.6px;top:354px;height:36px;line-height:36px;font-family:'Liberation Mono', monospace;font-size:24px;letter-spacing:0.048px;white-space:pre;padding-top:2px;-webkit-text-stroke:0.35px;"><span style="color:#ce9178">"search-result-item"</span><span style="color:#d4d4d4">,</span></div>
<div style="position:absolute;left:107px;top:390px;width:946px;height:36px;background:#4b2424;"></div>
<div style="position:absolute;left:538.5px;top:390px;width:6px;height:36px;background:#842a23;"></div>
<div style="position:absolute;left:107.0px;top:390px;width:2px;height:36px;background:rgba(255,255,255,0.13);"></div>
<div style="position:absolute;left:164.8px;top:390px;width:2px;height:36px;background:rgba(255,255,255,0.13);"></div>
<div style="position:absolute;left:222.6px;top:390px;width:2px;height:36px;background:rgba(255,255,255,0.13);"></div>
<div style="position:absolute;left:280.4px;top:390px;width:2px;height:36px;background:rgba(255,255,255,0.13);"></div>
<div style="position:absolute;left:338.2px;top:390px;width:2px;height:36px;background:rgba(255,255,255,0.13);"></div>
<div style="position:absolute;left:396.0px;top:390px;width:2px;height:36px;background:rgba(255,255,255,0.13);"></div>
<div style="position:absolute;left:453.8px;top:390px;width:2px;height:36px;background:rgba(255,255,255,0.13);"></div>
<div style="position:absolute;left:19px;top:390px;width:60px;height:36px;line-height:36px;text-align:right;font-family:'Liberation Mono', monospace;font-size:24px;color:#6e7681;font-weight:400;white-space:pre;padding-top:2px;-webkit-text-stroke:0.3px;">140</div>
<div style="position:absolute;left:512.6px;top:390px;height:36px;line-height:36px;font-family:'Liberation Mono', monospace;font-size:24px;letter-spacing:0.048px;white-space:pre;padding-top:2px;-webkit-text-stroke:0.35px;"><span style="color:#ce9178">"p-2"</span><span style="color:#d4d4d4">,</span></div>
<div style="position:absolute;left:107px;top:426px;width:946px;height:36px;background:repeating-linear-gradient(-45deg, #1f1f1f 0px, #1f1f1f 8.5px, #3a3a3a 8.5px, #3a3a3a 11.3px);"></div>
<div style="position:absolute;left:107.0px;top:462px;width:2px;height:36px;background:rgba(255,255,255,0.13);"></div>
<div style="position:absolute;left:164.8px;top:462px;width:2px;height:36px;background:rgba(255,255,255,0.13);"></div>
<div style="position:absolute;left:222.6px;top:462px;width:2px;height:36px;background:rgba(255,255,255,0.13);"></div>
<div style="position:absolute;left:280.4px;top:462px;width:2px;height:36px;background:rgba(255,255,255,0.13);"></div>
<div style="position:absolute;left:338.2px;top:462px;width:2px;height:36px;background:rgba(255,255,255,0.13);"></div>
<div style="position:absolute;left:396.0px;top:462px;width:2px;height:36px;background:rgba(255,255,255,0.13);"></div>
<div style="position:absolute;left:453.8px;top:462px;width:2px;height:36px;background:rgba(255,255,255,0.13);"></div>
<div style="position:absolute;left:19px;top:462px;width:60px;height:36px;line-height:36px;text-align:right;font-family:'Liberation Mono', monospace;font-size:24px;color:#6e7681;font-weight:400;white-space:pre;padding-top:2px;-webkit-text-stroke:0.3px;">141</div>
<div style="position:absolute;left:512.6px;top:462px;height:36px;line-height:36px;font-family:'Liberation Mono', monospace;font-size:24px;letter-spacing:0.048px;white-space:pre;padding-top:2px;-webkit-text-stroke:0.35px;"><span style="color:#ce9178">"hover:bg-gray-100"</span></div>
<div style="position:absolute;left:107.0px;top:498px;width:2px;height:36px;background:rgba(255,255,255,0.13);"></div>
<div style="position:absolute;left:164.8px;top:498px;width:2px;height:36px;background:rgba(255,255,255,0.13);"></div>
<div style="position:absolute;left:222.6px;top:498px;width:2px;height:36px;background:rgba(255,255,255,0.13);"></div>
<div style="position:absolute;left:280.4px;top:498px;width:2px;height:36px;background:rgba(255,255,255,0.13);"></div>
<div style="position:absolute;left:338.2px;top:498px;width:2px;height:36px;background:rgba(255,255,255,0.13);"></div>
<div style="position:absolute;left:396.0px;top:498px;width:2px;height:36px;background:rgba(255,255,255,0.13);"></div>
<div style="position:absolute;left:19px;top:498px;width:60px;height:36px;line-height:36px;text-align:right;font-family:'Liberation Mono', monospace;font-size:24px;color:#6e7681;font-weight:400;white-space:pre;padding-top:2px;-webkit-text-stroke:0.3px;">142</div>
<div style="position:absolute;left:454.8px;top:498px;height:36px;line-height:36px;font-family:'Liberation Mono', monospace;font-size:24px;letter-spacing:0.048px;white-space:pre;padding-top:2px;-webkit-text-stroke:0.35px;"><span style="color:#ffd700">)</span><span style="color:#d4d4d4">;</span></div>
<div style="position:absolute;left:107.0px;top:534px;width:2px;height:36px;background:rgba(255,255,255,0.13);"></div>
<div style="position:absolute;left:164.8px;top:534px;width:2px;height:36px;background:rgba(255,255,255,0.13);"></div>
<div style="position:absolute;left:222.6px;top:534px;width:2px;height:36px;background:rgba(255,255,255,0.13);"></div>
<div style="position:absolute;left:280.4px;top:534px;width:2px;height:36px;background:rgba(255,255,255,0.13);"></div>
<div style="position:absolute;left:338.2px;top:534px;width:2px;height:36px;background:rgba(255,255,255,0.13);"></div>
<div style="position:absolute;left:396.0px;top:534px;width:2px;height:36px;background:rgba(255,255,255,0.13);"></div>
<div style="position:absolute;left:19px;top:534px;width:60px;height:36px;line-height:36px;text-align:right;font-family:'Liberation Mono', monospace;font-size:24px;color:#6e7681;font-weight:400;white-space:pre;padding-top:2px;-webkit-text-stroke:0.3px;">143</div>
<div style="position:absolute;left:107.0px;top:570px;width:2px;height:36px;background:rgba(255,255,255,0.13);"></div>
<div style="position:absolute;left:164.8px;top:570px;width:2px;height:36px;background:rgba(255,255,255,0.13);"></div>
<div style="position:absolute;left:222.6px;top:570px;width:2px;height:36px;background:rgba(255,255,255,0.13);"></div>
<div style="position:absolute;left:280.4px;top:570px;width:2px;height:36px;background:rgba(255,255,255,0.13);"></div>
<div style="position:absolute;left:338.2px;top:570px;width:2px;height:36px;background:rgba(255,255,255,0.13);"></div>
<div style="position:absolute;left:396.0px;top:570px;width:2px;height:36px;background:rgba(255,255,255,0.13);"></div>
<div style="position:absolute;left:19px;top:570px;width:60px;height:36px;line-height:36px;text-align:right;font-family:'Liberation Mono', monospace;font-size:24px;color:#6e7681;font-weight:400;white-space:pre;padding-top:2px;-webkit-text-stroke:0.3px;">144</div>
<div style="position:absolute;left:454.8px;top:570px;height:36px;line-height:36px;font-family:'Liberation Mono', monospace;font-size:24px;letter-spacing:0.048px;white-space:pre;padding-top:2px;-webkit-text-stroke:0.35px;"><span style="color:#569cd6">let</span><span style="color:#d4d4d4"> </span><span style="color:#9cdcfe">productsHtml</span><span style="color:#d4d4d4"> = </span><span style="color:#ce9178">`&lt;a href="</span><span style="color:#ffd700">${</span><span style="color:#9cdcfe">product</span><span style="color:#d4d4d4">.</span><span style="color:#9cdcfe">link</span><span style="color:#ffd700">}</span><span style="color:#ce9178">"&gt;</span></div>
<div style="position:absolute;left:107.0px;top:606px;width:2px;height:36px;background:rgba(255,255,255,0.13);"></div>
<div style="position:absolute;left:164.8px;top:606px;width:2px;height:36px;background:rgba(255,255,255,0.13);"></div>
<div style="position:absolute;left:222.6px;top:606px;width:2px;height:36px;background:rgba(255,255,255,0.13);"></div>
<div style="position:absolute;left:280.4px;top:606px;width:2px;height:36px;background:rgba(255,255,255,0.13);"></div>
<div style="position:absolute;left:338.2px;top:606px;width:2px;height:36px;background:rgba(255,255,255,0.13);"></div>
<div style="position:absolute;left:396.0px;top:606px;width:2px;height:36px;background:rgba(255,255,255,0.13);"></div>
<div style="position:absolute;left:453.8px;top:606px;width:2px;height:36px;background:rgba(255,255,255,0.13);"></div>
<div style="position:absolute;left:19px;top:606px;width:60px;height:36px;line-height:36px;text-align:right;font-family:'Liberation Mono', monospace;font-size:24px;color:#6e7681;font-weight:400;white-space:pre;padding-top:2px;-webkit-text-stroke:0.3px;">145</div>
<div style="position:absolute;left:512.6px;top:606px;height:36px;line-height:36px;font-family:'Liberation Mono', monospace;font-size:24px;letter-spacing:0.048px;white-space:pre;padding-top:2px;-webkit-text-stroke:0.35px;"><span style="color:#ce9178">&lt;div class="flex gap-[8px] border-b border-white p-2"&gt;</span></div>
<div style="position:absolute;left:107.0px;top:642px;width:2px;height:36px;background:rgba(255,255,255,0.13);"></div>
<div style="position:absolute;left:164.8px;top:642px;width:2px;height:36px;background:rgba(255,255,255,0.13);"></div>
<div style="position:absolute;left:222.6px;top:642px;width:2px;height:36px;background:rgba(255,255,255,0.13);"></div>
<div style="position:absolute;left:280.4px;top:642px;width:2px;height:36px;background:rgba(255,255,255,0.13);"></div>
<div style="position:absolute;left:338.2px;top:642px;width:2px;height:36px;background:rgba(255,255,255,0.13);"></div>
<div style="position:absolute;left:396.0px;top:642px;width:2px;height:36px;background:rgba(255,255,255,0.13);"></div>
<div style="position:absolute;left:453.8px;top:642px;width:2px;height:36px;background:rgba(255,255,255,0.13);"></div>
<div style="position:absolute;left:19px;top:642px;width:60px;height:36px;line-height:36px;text-align:right;font-family:'Liberation Mono', monospace;font-size:24px;color:#6e7681;font-weight:400;white-space:pre;padding-top:2px;-webkit-text-stroke:0.3px;">146</div>
<div style="position:absolute;left:107.0px;top:678px;width:2px;height:36px;background:rgba(255,255,255,0.13);"></div>
<div style="position:absolute;left:164.8px;top:678px;width:2px;height:36px;background:rgba(255,255,255,0.13);"></div>
<div style="position:absolute;left:222.6px;top:678px;width:2px;height:36px;background:rgba(255,255,255,0.13);"></div>
<div style="position:absolute;left:280.4px;top:678px;width:2px;height:36px;background:rgba(255,255,255,0.13);"></div>
<div style="position:absolute;left:338.2px;top:678px;width:2px;height:36px;background:rgba(255,255,255,0.13);"></div>
<div style="position:absolute;left:396.0px;top:678px;width:2px;height:36px;background:rgba(255,255,255,0.13);"></div>
<div style="position:absolute;left:19px;top:678px;width:60px;height:36px;line-height:36px;text-align:right;font-family:'Liberation Mono', monospace;font-size:24px;color:#6e7681;font-weight:400;white-space:pre;padding-top:2px;-webkit-text-stroke:0.3px;">147</div>
<div style="position:absolute;left:454.8px;top:678px;height:36px;line-height:36px;font-family:'Liberation Mono', monospace;font-size:24px;letter-spacing:0.048px;white-space:pre;padding-top:2px;-webkit-text-stroke:0.35px;"><span style="color:#c586c0">if</span><span style="color:#d4d4d4"> </span><span style="color:#ffd700">(</span><span style="color:#9cdcfe">product</span><span style="color:#d4d4d4">.</span><span style="color:#9cdcfe">discount</span><span style="color:#ffd700">)</span><span style="color:#d4d4d4"> </span><span style="color:#ffd700">{</span></div>
<div style="position:absolute;left:107.0px;top:714px;width:2px;height:36px;background:rgba(255,255,255,0.13);"></div>
<div style="position:absolute;left:164.8px;top:714px;width:2px;height:36px;background:rgba(255,255,255,0.13);"></div>
<div style="position:absolute;left:222.6px;top:714px;width:2px;height:36px;background:rgba(255,255,255,0.13);"></div>
<div style="position:absolute;left:280.4px;top:714px;width:2px;height:36px;background:rgba(255,255,255,0.13);"></div>
<div style="position:absolute;left:338.2px;top:714px;width:2px;height:36px;background:rgba(255,255,255,0.13);"></div>
<div style="position:absolute;left:396.0px;top:714px;width:2px;height:36px;background:rgba(255,255,255,0.13);"></div>
<div style="position:absolute;left:453.8px;top:714px;width:2px;height:36px;background:rgba(255,255,255,0.13);"></div>
<div style="position:absolute;left:19px;top:714px;width:60px;height:36px;line-height:36px;text-align:right;font-family:'Liberation Mono', monospace;font-size:24px;color:#6e7681;font-weight:400;white-space:pre;padding-top:2px;-webkit-text-stroke:0.3px;">148</div>
<div style="position:absolute;left:512.6px;top:714px;height:36px;line-height:36px;font-family:'Liberation Mono', monospace;font-size:24px;letter-spacing:0.048px;white-space:pre;padding-top:2px;-webkit-text-stroke:0.35px;"><span style="color:#9cdcfe">productsHtml</span><span style="color:#d4d4d4"> += </span><span style="color:#ce9178">`&lt;div class="absolute top-0 left-0"&gt;</span></div>
<div style="position:absolute;left:107.0px;top:750px;width:2px;height:36px;background:rgba(255,255,255,0.13);"></div>
<div style="position:absolute;left:164.8px;top:750px;width:2px;height:36px;background:rgba(255,255,255,0.13);"></div>
<div style="position:absolute;left:222.6px;top:750px;width:2px;height:36px;background:rgba(255,255,255,0.13);"></div>
<div style="position:absolute;left:280.4px;top:750px;width:2px;height:36px;background:rgba(255,255,255,0.13);"></div>
<div style="position:absolute;left:338.2px;top:750px;width:2px;height:36px;background:rgba(255,255,255,0.13);"></div>
<div style="position:absolute;left:396.0px;top:750px;width:2px;height:36px;background:rgba(255,255,255,0.13);"></div>
<div style="position:absolute;left:19px;top:750px;width:60px;height:36px;line-height:36px;text-align:right;font-family:'Liberation Mono', monospace;font-size:24px;color:#6e7681;font-weight:400;white-space:pre;padding-top:2px;-webkit-text-stroke:0.3px;">149</div>
<div style="position:absolute;left:454.8px;top:750px;height:36px;line-height:36px;font-family:'Liberation Mono', monospace;font-size:24px;letter-spacing:0.048px;white-space:pre;padding-top:2px;-webkit-text-stroke:0.35px;"><span style="color:#ffd700">}</span></div>
<div style="position:absolute;left:107.0px;top:786px;width:2px;height:36px;background:rgba(255,255,255,0.13);"></div>
<div style="position:absolute;left:164.8px;top:786px;width:2px;height:36px;background:rgba(255,255,255,0.13);"></div>
<div style="position:absolute;left:222.6px;top:786px;width:2px;height:36px;background:rgba(255,255,255,0.13);"></div>
<div style="position:absolute;left:280.4px;top:786px;width:2px;height:36px;background:rgba(255,255,255,0.13);"></div>
<div style="position:absolute;left:338.2px;top:786px;width:2px;height:36px;background:rgba(255,255,255,0.13);"></div>
<div style="position:absolute;left:396.0px;top:786px;width:2px;height:36px;background:rgba(255,255,255,0.13);"></div>
<div style="position:absolute;left:19px;top:786px;width:60px;height:36px;line-height:36px;text-align:right;font-family:'Liberation Mono', monospace;font-size:24px;color:#6e7681;font-weight:400;white-space:pre;padding-top:2px;-webkit-text-stroke:0.3px;">150</div>
<div style="position:absolute;left:107.0px;top:822px;width:2px;height:36px;background:rgba(255,255,255,0.13);"></div>
<div style="position:absolute;left:164.8px;top:822px;width:2px;height:36px;background:rgba(255,255,255,0.13);"></div>
<div style="position:absolute;left:222.6px;top:822px;width:2px;height:36px;background:rgba(255,255,255,0.13);"></div>
<div style="position:absolute;left:280.4px;top:822px;width:2px;height:36px;background:rgba(255,255,255,0.13);"></div>
<div style="position:absolute;left:338.2px;top:822px;width:2px;height:36px;background:rgba(255,255,255,0.13);"></div>
<div style="position:absolute;left:396.0px;top:822px;width:2px;height:36px;background:rgba(255,255,255,0.13);"></div>
<div style="position:absolute;left:19px;top:822px;width:60px;height:36px;line-height:36px;text-align:right;font-family:'Liberation Mono', monospace;font-size:24px;color:#6e7681;font-weight:400;white-space:pre;padding-top:2px;-webkit-text-stroke:0.3px;">151</div>
<div style="position:absolute;left:454.8px;top:822px;height:36px;line-height:36px;font-family:'Liberation Mono', monospace;font-size:24px;letter-spacing:0.048px;white-space:pre;padding-top:2px;-webkit-text-stroke:0.35px;"><span style="color:#9cdcfe">productsHtml</span><span style="color:#d4d4d4"> += </span><span style="color:#ce9178">`</span></div>
<div style="position:absolute;left:107.0px;top:858px;width:2px;height:36px;background:rgba(255,255,255,0.13);"></div>
<div style="position:absolute;left:164.8px;top:858px;width:2px;height:36px;background:rgba(255,255,255,0.13);"></div>
<div style="position:absolute;left:222.6px;top:858px;width:2px;height:36px;background:rgba(255,255,255,0.13);"></div>
<div style="position:absolute;left:280.4px;top:858px;width:2px;height:36px;background:rgba(255,255,255,0.13);"></div>
<div style="position:absolute;left:338.2px;top:858px;width:2px;height:36px;background:rgba(255,255,255,0.13);"></div>
<div style="position:absolute;left:396.0px;top:858px;width:2px;height:36px;background:rgba(255,255,255,0.13);"></div>
<div style="position:absolute;left:453.8px;top:858px;width:2px;height:36px;background:rgba(255,255,255,0.13);"></div>
<div style="position:absolute;left:19px;top:858px;width:60px;height:36px;line-height:36px;text-align:right;font-family:'Liberation Mono', monospace;font-size:24px;color:#6e7681;font-weight:400;white-space:pre;padding-top:2px;-webkit-text-stroke:0.3px;">152</div>
<div style="position:absolute;left:512.6px;top:858px;height:36px;line-height:36px;font-family:'Liberation Mono', monospace;font-size:24px;letter-spacing:0.048px;white-space:pre;padding-top:2px;-webkit-text-stroke:0.35px;"><span style="color:#ce9178">&lt;div class="w-[110px] mr-4 product-card-image"&gt;</span></div>
<div style="position:absolute;left:107.0px;top:894px;width:2px;height:36px;background:rgba(255,255,255,0.13);"></div>
<div style="position:absolute;left:164.8px;top:894px;width:2px;height:36px;background:rgba(255,255,255,0.13);"></div>
<div style="position:absolute;left:222.6px;top:894px;width:2px;height:36px;background:rgba(255,255,255,0.13);"></div>
<div style="position:absolute;left:280.4px;top:894px;width:2px;height:36px;background:rgba(255,255,255,0.13);"></div>
<div style="position:absolute;left:338.2px;top:894px;width:2px;height:36px;background:rgba(255,255,255,0.13);"></div>
<div style="position:absolute;left:396.0px;top:894px;width:2px;height:36px;background:rgba(255,255,255,0.13);"></div>
<div style="position:absolute;left:453.8px;top:894px;width:2px;height:36px;background:rgba(255,255,255,0.13);"></div>
<div style="position:absolute;left:19px;top:894px;width:60px;height:36px;line-height:36px;text-align:right;font-family:'Liberation Mono', monospace;font-size:24px;color:#6e7681;font-weight:400;white-space:pre;padding-top:2px;-webkit-text-stroke:0.3px;">153</div>
<div style="position:absolute;left:512.6px;top:894px;height:36px;line-height:36px;font-family:'Liberation Mono', monospace;font-size:24px;letter-spacing:0.048px;white-space:pre;padding-top:2px;-webkit-text-stroke:0.35px;"><span style="color:#ce9178">&lt;div class="flex flex-col gap-[8px]"&gt;</span></div>
<div style="position:absolute;left:107.0px;top:930px;width:2px;height:36px;background:rgba(255,255,255,0.13);"></div>
<div style="position:absolute;left:164.8px;top:930px;width:2px;height:36px;background:rgba(255,255,255,0.13);"></div>
<div style="position:absolute;left:222.6px;top:930px;width:2px;height:36px;background:rgba(255,255,255,0.13);"></div>
<div style="position:absolute;left:280.4px;top:930px;width:2px;height:36px;background:rgba(255,255,255,0.13);"></div>
<div style="position:absolute;left:338.2px;top:930px;width:2px;height:36px;background:rgba(255,255,255,0.13);"></div>
<div style="position:absolute;left:396.0px;top:930px;width:2px;height:36px;background:rgba(255,255,255,0.13);"></div>
<div style="position:absolute;left:453.8px;top:930px;width:2px;height:36px;background:rgba(255,255,255,0.13);"></div>
<div style="position:absolute;left:511.6px;top:930px;width:2px;height:36px;background:rgba(255,255,255,0.13);"></div>
<div style="position:absolute;left:19px;top:930px;width:60px;height:36px;line-height:36px;text-align:right;font-family:'Liberation Mono', monospace;font-size:24px;color:#6e7681;font-weight:400;white-space:pre;padding-top:2px;-webkit-text-stroke:0.3px;">154</div>
<div style="position:absolute;left:570.4px;top:930px;height:36px;line-height:36px;font-family:'Liberation Mono', monospace;font-size:24px;letter-spacing:0.048px;white-space:pre;padding-top:2px;-webkit-text-stroke:0.35px;"><span style="color:#ce9178">&lt;div class="font-noto-display-semibold"&gt;</span></div>
<div style="position:absolute;left:107.0px;top:966px;width:2px;height:36px;background:rgba(255,255,255,0.13);"></div>
<div style="position:absolute;left:164.8px;top:966px;width:2px;height:36px;background:rgba(255,255,255,0.13);"></div>
<div style="position:absolute;left:222.6px;top:966px;width:2px;height:36px;background:rgba(255,255,255,0.13);"></div>
<div style="position:absolute;left:280.4px;top:966px;width:2px;height:36px;background:rgba(255,255,255,0.13);"></div>
<div style="position:absolute;left:338.2px;top:966px;width:2px;height:36px;background:rgba(255,255,255,0.13);"></div>
<div style="position:absolute;left:396.0px;top:966px;width:2px;height:36px;background:rgba(255,255,255,0.13);"></div>
<div style="position:absolute;left:453.8px;top:966px;width:2px;height:36px;background:rgba(255,255,255,0.13);"></div>
<div style="position:absolute;left:511.6px;top:966px;width:2px;height:36px;background:rgba(255,255,255,0.13);"></div>
<div style="position:absolute;left:19px;top:966px;width:60px;height:36px;line-height:36px;text-align:right;font-family:'Liberation Mono', monospace;font-size:24px;color:#6e7681;font-weight:400;white-space:pre;padding-top:2px;-webkit-text-stroke:0.3px;">155</div>
<div style="position:absolute;left:570.4px;top:966px;height:36px;line-height:36px;font-family:'Liberation Mono', monospace;font-size:24px;letter-spacing:0.048px;white-space:pre;padding-top:2px;-webkit-text-stroke:0.35px;"><span style="color:#ce9178">&lt;div class="flex items-center gap-[4px]"&gt;</span></div>
<div style="position:absolute;left:107.0px;top:1002px;width:2px;height:36px;background:rgba(255,255,255,0.13);"></div>
<div style="position:absolute;left:164.8px;top:1002px;width:2px;height:36px;background:rgba(255,255,255,0.13);"></div>
<div style="position:absolute;left:222.6px;top:1002px;width:2px;height:36px;background:rgba(255,255,255,0.13);"></div>
<div style="position:absolute;left:280.4px;top:1002px;width:2px;height:36px;background:rgba(255,255,255,0.13);"></div>
<div style="position:absolute;left:338.2px;top:1002px;width:2px;height:36px;background:rgba(255,255,255,0.13);"></div>
<div style="position:absolute;left:396.0px;top:1002px;width:2px;height:36px;background:rgba(255,255,255,0.13);"></div>
<div style="position:absolute;left:453.8px;top:1002px;width:2px;height:36px;background:rgba(255,255,255,0.13);"></div>
<div style="position:absolute;left:511.6px;top:1002px;width:2px;height:36px;background:rgba(255,255,255,0.13);"></div>
<div style="position:absolute;left:569.4px;top:1002px;width:2px;height:36px;background:rgba(255,255,255,0.13);"></div>
<div style="position:absolute;left:19px;top:1002px;width:60px;height:36px;line-height:36px;text-align:right;font-family:'Liberation Mono', monospace;font-size:24px;color:#6e7681;font-weight:400;white-space:pre;padding-top:2px;-webkit-text-stroke:0.3px;">156</div>
<div style="position:absolute;left:628.2px;top:1002px;height:36px;line-height:36px;font-family:'Liberation Mono', monospace;font-size:24px;letter-spacing:0.048px;white-space:pre;padding-top:2px;-webkit-text-stroke:0.35px;"><span style="color:#ce9178">&lt;div&gt;&lt;span class="font-noto-display"&gt;</span></div>
<div style="position:absolute;left:107.0px;top:1038px;width:2px;height:36px;background:rgba(255,255,255,0.13);"></div>
<div style="position:absolute;left:164.8px;top:1038px;width:2px;height:36px;background:rgba(255,255,255,0.13);"></div>
<div style="position:absolute;left:222.6px;top:1038px;width:2px;height:36px;background:rgba(255,255,255,0.13);"></div>
<div style="position:absolute;left:280.4px;top:1038px;width:2px;height:36px;background:rgba(255,255,255,0.13);"></div>
<div style="position:absolute;left:338.2px;top:1038px;width:2px;height:36px;background:rgba(255,255,255,0.13);"></div>
<div style="position:absolute;left:396.0px;top:1038px;width:2px;height:36px;background:rgba(255,255,255,0.13);"></div>
<div style="position:absolute;left:453.8px;top:1038px;width:2px;height:36px;background:rgba(255,255,255,0.13);"></div>
<div style="position:absolute;left:19px;top:1038px;width:60px;height:36px;line-height:36px;text-align:right;font-family:'Liberation Mono', monospace;font-size:24px;color:#6e7681;font-weight:400;white-space:pre;padding-top:2px;-webkit-text-stroke:0.3px;">157</div>
<div style="position:absolute;left:107.0px;top:1074px;width:2px;height:36px;background:rgba(255,255,255,0.13);"></div>
<div style="position:absolute;left:164.8px;top:1074px;width:2px;height:36px;background:rgba(255,255,255,0.13);"></div>
<div style="position:absolute;left:222.6px;top:1074px;width:2px;height:36px;background:rgba(255,255,255,0.13);"></div>
<div style="position:absolute;left:280.4px;top:1074px;width:2px;height:36px;background:rgba(255,255,255,0.13);"></div>
<div style="position:absolute;left:338.2px;top:1074px;width:2px;height:36px;background:rgba(255,255,255,0.13);"></div>
<div style="position:absolute;left:396.0px;top:1074px;width:2px;height:36px;background:rgba(255,255,255,0.13);"></div>
<div style="position:absolute;left:19px;top:1074px;width:60px;height:36px;line-height:36px;text-align:right;font-family:'Liberation Mono', monospace;font-size:24px;color:#6e7681;font-weight:400;white-space:pre;padding-top:2px;-webkit-text-stroke:0.3px;">158</div>
<div style="position:absolute;left:454.8px;top:1074px;height:36px;line-height:36px;font-family:'Liberation Mono', monospace;font-size:24px;letter-spacing:0.048px;white-space:pre;padding-top:2px;-webkit-text-stroke:0.35px;"><span style="color:#c586c0">if</span><span style="color:#d4d4d4"> </span><span style="color:#ffd700">(</span><span style="color:#9cdcfe">product</span><span style="color:#d4d4d4">.</span><span style="color:#9cdcfe">discount</span><span style="color:#ffd700">)</span><span style="color:#d4d4d4"> </span><span style="color:#ffd700">{</span></div>
<div style="position:absolute;left:107.0px;top:1110px;width:2px;height:36px;background:rgba(255,255,255,0.13);"></div>
<div style="position:absolute;left:164.8px;top:1110px;width:2px;height:36px;background:rgba(255,255,255,0.13);"></div>
<div style="position:absolute;left:222.6px;top:1110px;width:2px;height:36px;background:rgba(255,255,255,0.13);"></div>
<div style="position:absolute;left:280.4px;top:1110px;width:2px;height:36px;background:rgba(255,255,255,0.13);"></div>
<div style="position:absolute;left:338.2px;top:1110px;width:2px;height:36px;background:rgba(255,255,255,0.13);"></div>
<div style="position:absolute;left:396.0px;top:1110px;width:2px;height:36px;background:rgba(255,255,255,0.13);"></div>
<div style="position:absolute;left:453.8px;top:1110px;width:2px;height:36px;background:rgba(255,255,255,0.13);"></div>
<div style="position:absolute;left:19px;top:1110px;width:60px;height:36px;line-height:36px;text-align:right;font-family:'Liberation Mono', monospace;font-size:24px;color:#6e7681;font-weight:400;white-space:pre;padding-top:2px;-webkit-text-stroke:0.3px;">159</div>
<div style="position:absolute;left:512.6px;top:1110px;height:36px;line-height:36px;font-family:'Liberation Mono', monospace;font-size:24px;letter-spacing:0.048px;white-space:pre;padding-top:2px;-webkit-text-stroke:0.35px;"><span style="color:#9cdcfe">productsHtml</span><span style="color:#d4d4d4"> += </span><span style="color:#ce9178">`</span></div>
<div style="position:absolute;left:107.0px;top:1146px;width:2px;height:36px;background:rgba(255,255,255,0.13);"></div>
<div style="position:absolute;left:164.8px;top:1146px;width:2px;height:36px;background:rgba(255,255,255,0.13);"></div>
<div style="position:absolute;left:222.6px;top:1146px;width:2px;height:36px;background:rgba(255,255,255,0.13);"></div>
<div style="position:absolute;left:280.4px;top:1146px;width:2px;height:36px;background:rgba(255,255,255,0.13);"></div>
<div style="position:absolute;left:338.2px;top:1146px;width:2px;height:36px;background:rgba(255,255,255,0.13);"></div>
<div style="position:absolute;left:396.0px;top:1146px;width:2px;height:36px;background:rgba(255,255,255,0.13);"></div>
<div style="position:absolute;left:453.8px;top:1146px;width:2px;height:36px;background:rgba(255,255,255,0.13);"></div>
<div style="position:absolute;left:511.6px;top:1146px;width:2px;height:36px;background:rgba(255,255,255,0.13);"></div>
<div style="position:absolute;left:569.4px;top:1146px;width:2px;height:36px;background:rgba(255,255,255,0.13);"></div>
<div style="position:absolute;left:19px;top:1146px;width:60px;height:36px;line-height:36px;text-align:right;font-family:'Liberation Mono', monospace;font-size:24px;color:#6e7681;font-weight:400;white-space:pre;padding-top:2px;-webkit-text-stroke:0.3px;">160</div>
<div style="position:absolute;left:628.2px;top:1146px;height:36px;line-height:36px;font-family:'Liberation Mono', monospace;font-size:24px;letter-spacing:0.048px;white-space:pre;padding-top:2px;-webkit-text-stroke:0.35px;"><span style="color:#ce9178">&lt;div class="flex items-center gap-[4px]"&gt;</span></div>
</div>
<div class="c" style="left:1752px;top:140px;width:1056px;height:1167px;">
<div style="position:absolute;left:108.0px;top:-6px;width:2px;height:36px;background:rgba(255,255,255,0.13);"></div>
<div style="position:absolute;left:165.8px;top:-6px;width:2px;height:36px;background:rgba(255,255,255,0.13);"></div>
<div style="position:absolute;left:223.6px;top:-6px;width:2px;height:36px;background:rgba(255,255,255,0.13);"></div>
<div style="position:absolute;left:281.4px;top:-6px;width:2px;height:36px;background:rgba(255,255,255,0.13);"></div>
<div style="position:absolute;left:339.2px;top:-6px;width:2px;height:36px;background:rgba(255,255,255,0.13);"></div>
<div style="position:absolute;left:397.0px;top:-6px;width:2px;height:36px;background:rgba(255,255,255,0.13);"></div>
<div style="position:absolute;left:20px;top:-6px;width:60px;height:36px;line-height:36px;text-align:right;font-family:'Liberation Mono', monospace;font-size:24px;color:#6e7681;font-weight:400;white-space:pre;padding-top:2px;-webkit-text-stroke:0.3px;">129</div>
<div style="position:absolute;left:108.0px;top:30px;width:2px;height:36px;background:rgba(255,255,255,0.13);"></div>
<div style="position:absolute;left:165.8px;top:30px;width:2px;height:36px;background:rgba(255,255,255,0.13);"></div>
<div style="position:absolute;left:223.6px;top:30px;width:2px;height:36px;background:rgba(255,255,255,0.13);"></div>
<div style="position:absolute;left:281.4px;top:30px;width:2px;height:36px;background:rgba(255,255,255,0.13);"></div>
<div style="position:absolute;left:339.2px;top:30px;width:2px;height:36px;background:rgba(255,255,255,0.13);"></div>
<div style="position:absolute;left:397.0px;top:30px;width:2px;height:36px;background:rgba(255,255,255,0.13);"></div>
<div style="position:absolute;left:20px;top:30px;width:60px;height:36px;line-height:36px;text-align:right;font-family:'Liberation Mono', monospace;font-size:24px;color:#6e7681;font-weight:400;white-space:pre;padding-top:2px;-webkit-text-stroke:0.3px;">130</div>
<div style="position:absolute;left:455.8px;top:30px;height:36px;line-height:36px;font-family:'Liberation Mono', monospace;font-size:24px;letter-spacing:0.048px;white-space:pre;padding-top:2px;-webkit-text-stroke:0.35px;"><span style="color:#569cd6">const</span><span style="color:#d4d4d4"> </span><span style="color:#4fc1ff">categoriesWrapp</span><span style="color:#d4d4d4"> = </span><span style="color:#9cdcfe">document</span><span style="color:#d4d4d4">.</span><span style="color:#dcdcaa">createElement</span><span style="color:#179fff">(</span><span style="color:#ce9178">"div"</span><span style="color:#d4d4d4">);</span></div>
<div style="position:absolute;left:108.0px;top:66px;width:2px;height:36px;background:rgba(255,255,255,0.13);"></div>
<div style="position:absolute;left:165.8px;top:66px;width:2px;height:36px;background:rgba(255,255,255,0.13);"></div>
<div style="position:absolute;left:223.6px;top:66px;width:2px;height:36px;background:rgba(255,255,255,0.13);"></div>
<div style="position:absolute;left:281.4px;top:66px;width:2px;height:36px;background:rgba(255,255,255,0.13);"></div>
<div style="position:absolute;left:339.2px;top:66px;width:2px;height:36px;background:rgba(255,255,255,0.13);"></div>
<div style="position:absolute;left:397.0px;top:66px;width:2px;height:36px;background:rgba(255,255,255,0.13);"></div>
<div style="position:absolute;left:20px;top:66px;width:60px;height:36px;line-height:36px;text-align:right;font-family:'Liberation Mono', monospace;font-size:24px;color:#6e7681;font-weight:400;white-space:pre;padding-top:2px;-webkit-text-stroke:0.3px;">131</div>
<div style="position:absolute;left:455.8px;top:66px;height:36px;line-height:36px;font-family:'Liberation Mono', monospace;font-size:24px;letter-spacing:0.048px;white-space:pre;padding-top:2px;-webkit-text-stroke:0.35px;"><span style="color:#9cdcfe">categoriesWrapp</span><span style="color:#d4d4d4">.</span><span style="color:#9cdcfe">classList</span><span style="color:#d4d4d4">.</span><span style="color:#dcdcaa">add</span><span style="color:#179fff">(</span><span style="color:#ce9178">"search-result-categories"</span><span style="color:#d4d4d4">);</span></div>
<div style="position:absolute;left:108.0px;top:102px;width:2px;height:36px;background:rgba(255,255,255,0.13);"></div>
<div style="position:absolute;left:165.8px;top:102px;width:2px;height:36px;background:rgba(255,255,255,0.13);"></div>
<div style="position:absolute;left:223.6px;top:102px;width:2px;height:36px;background:rgba(255,255,255,0.13);"></div>
<div style="position:absolute;left:281.4px;top:102px;width:2px;height:36px;background:rgba(255,255,255,0.13);"></div>
<div style="position:absolute;left:339.2px;top:102px;width:2px;height:36px;background:rgba(255,255,255,0.13);"></div>
<div style="position:absolute;left:397.0px;top:102px;width:2px;height:36px;background:rgba(255,255,255,0.13);"></div>
<div style="position:absolute;left:20px;top:102px;width:60px;height:36px;line-height:36px;text-align:right;font-family:'Liberation Mono', monospace;font-size:24px;color:#6e7681;font-weight:400;white-space:pre;padding-top:2px;-webkit-text-stroke:0.3px;">132</div>
<div style="position:absolute;left:455.8px;top:102px;height:36px;line-height:36px;font-family:'Liberation Mono', monospace;font-size:24px;letter-spacing:0.048px;white-space:pre;padding-top:2px;-webkit-text-stroke:0.35px;"><span style="color:#9cdcfe">categoriesWrapp</span><span style="color:#d4d4d4">.</span><span style="color:#9cdcfe">innerHTML</span><span style="color:#d4d4d4"> = </span><span style="color:#9cdcfe">categoriesHtml</span><span style="color:#d4d4d4">;</span></div>
<div style="position:absolute;left:108.0px;top:138px;width:2px;height:36px;background:rgba(255,255,255,0.13);"></div>
<div style="position:absolute;left:165.8px;top:138px;width:2px;height:36px;background:rgba(255,255,255,0.13);"></div>
<div style="position:absolute;left:223.6px;top:138px;width:2px;height:36px;background:rgba(255,255,255,0.13);"></div>
<div style="position:absolute;left:281.4px;top:138px;width:2px;height:36px;background:rgba(255,255,255,0.13);"></div>
<div style="position:absolute;left:339.2px;top:138px;width:2px;height:36px;background:rgba(255,255,255,0.13);"></div>
<div style="position:absolute;left:397.0px;top:138px;width:2px;height:36px;background:rgba(255,255,255,0.13);"></div>
<div style="position:absolute;left:20px;top:138px;width:60px;height:36px;line-height:36px;text-align:right;font-family:'Liberation Mono', monospace;font-size:24px;color:#6e7681;font-weight:400;white-space:pre;padding-top:2px;-webkit-text-stroke:0.3px;">133</div>
<div style="position:absolute;left:455.8px;top:138px;height:36px;line-height:36px;font-family:'Liberation Mono', monospace;font-size:24px;letter-spacing:0.048px;white-space:pre;padding-top:2px;-webkit-text-stroke:0.35px;"><span style="color:#9cdcfe">wrapper</span><span style="color:#d4d4d4">.</span><span style="color:#dcdcaa">appendChild</span><span style="color:#179fff">(</span><span style="color:#4fc1ff">categoriesWrapp</span><span style="color:#179fff">)</span><span style="color:#d4d4d4">;</span></div>
<div style="position:absolute;left:108.0px;top:174px;width:2px;height:36px;background:rgba(255,255,255,0.13);"></div>
<div style="position:absolute;left:165.8px;top:174px;width:2px;height:36px;background:rgba(255,255,255,0.13);"></div>
<div style="position:absolute;left:223.6px;top:174px;width:2px;height:36px;background:rgba(255,255,255,0.13);"></div>
<div style="position:absolute;left:281.4px;top:174px;width:2px;height:36px;background:rgba(255,255,255,0.13);"></div>
<div style="position:absolute;left:339.2px;top:174px;width:2px;height:36px;background:rgba(255,255,255,0.13);"></div>
<div style="position:absolute;left:20px;top:174px;width:60px;height:36px;line-height:36px;text-align:right;font-family:'Liberation Mono', monospace;font-size:24px;color:#6e7681;font-weight:400;white-space:pre;padding-top:2px;-webkit-text-stroke:0.3px;">134</div>
<div style="position:absolute;left:398.0px;top:174px;height:36px;line-height:36px;font-family:'Liberation Mono', monospace;font-size:24px;letter-spacing:0.048px;white-space:pre;padding-top:2px;-webkit-text-stroke:0.35px;"><span style="color:#da70d6">}</span></div>
<div style="position:absolute;left:108.0px;top:210px;width:2px;height:36px;background:rgba(255,255,255,0.13);"></div>
<div style="position:absolute;left:165.8px;top:210px;width:2px;height:36px;background:rgba(255,255,255,0.13);"></div>
<div style="position:absolute;left:223.6px;top:210px;width:2px;height:36px;background:rgba(255,255,255,0.13);"></div>
<div style="position:absolute;left:281.4px;top:210px;width:2px;height:36px;background:rgba(255,255,255,0.13);"></div>
<div style="position:absolute;left:339.2px;top:210px;width:2px;height:36px;background:rgba(255,255,255,0.13);"></div>
<div style="position:absolute;left:20px;top:210px;width:60px;height:36px;line-height:36px;text-align:right;font-family:'Liberation Mono', monospace;font-size:24px;color:#6e7681;font-weight:400;white-space:pre;padding-top:2px;-webkit-text-stroke:0.3px;">135</div>
<div style="position:absolute;left:108.0px;top:246px;width:2px;height:36px;background:rgba(255,255,255,0.13);"></div>
<div style="position:absolute;left:165.8px;top:246px;width:2px;height:36px;background:rgba(255,255,255,0.13);"></div>
<div style="position:absolute;left:223.6px;top:246px;width:2px;height:36px;background:rgba(255,255,255,0.13);"></div>
<div style="position:absolute;left:281.4px;top:246px;width:2px;height:36px;background:rgba(255,255,255,0.13);"></div>
<div style="position:absolute;left:339.2px;top:246px;width:2px;height:36px;background:rgba(255,255,255,0.13);"></div>
<div style="position:absolute;left:20px;top:246px;width:60px;height:36px;line-height:36px;text-align:right;font-family:'Liberation Mono', monospace;font-size:24px;color:#6e7681;font-weight:400;white-space:pre;padding-top:2px;-webkit-text-stroke:0.3px;">136</div>
<div style="position:absolute;left:398.0px;top:246px;height:36px;line-height:36px;font-family:'Liberation Mono', monospace;font-size:24px;letter-spacing:0.048px;white-space:pre;padding-top:2px;-webkit-text-stroke:0.35px;"><span style="color:#9cdcfe">results</span><span style="color:#d4d4d4">.</span><span style="color:#9cdcfe">data</span><span style="color:#d4d4d4">.</span><span style="color:#9cdcfe">products</span><span style="color:#d4d4d4">.</span><span style="color:#dcdcaa">forEach</span><span style="color:#da70d6">(</span><span style="color:#179fff">(</span><span style="color:#9cdcfe">product</span><span style="color:#179fff">)</span><span style="color:#d4d4d4"> </span><span style="color:#569cd6">=&gt;</span><span style="color:#d4d4d4"> </span><span style="color:#179fff">{</span></div>
<div style="position:absolute;left:108.0px;top:282px;width:2px;height:36px;background:rgba(255,255,255,0.13);"></div>
<div style="position:absolute;left:165.8px;top:282px;width:2px;height:36px;background:rgba(255,255,255,0.13);"></div>
<div style="position:absolute;left:223.6px;top:282px;width:2px;height:36px;background:rgba(255,255,255,0.13);"></div>
<div style="position:absolute;left:281.4px;top:282px;width:2px;height:36px;background:rgba(255,255,255,0.13);"></div>
<div style="position:absolute;left:339.2px;top:282px;width:2px;height:36px;background:rgba(255,255,255,0.13);"></div>
<div style="position:absolute;left:397.0px;top:282px;width:2px;height:36px;background:rgba(255,255,255,0.13);"></div>
<div style="position:absolute;left:20px;top:282px;width:60px;height:36px;line-height:36px;text-align:right;font-family:'Liberation Mono', monospace;font-size:24px;color:#6e7681;font-weight:400;white-space:pre;padding-top:2px;-webkit-text-stroke:0.3px;">137</div>
<div style="position:absolute;left:455.8px;top:282px;height:36px;line-height:36px;font-family:'Liberation Mono', monospace;font-size:24px;letter-spacing:0.048px;white-space:pre;padding-top:2px;-webkit-text-stroke:0.35px;"><span style="color:#569cd6">const</span><span style="color:#d4d4d4"> </span><span style="color:#4fc1ff">resultItem</span><span style="color:#d4d4d4"> = </span><span style="color:#9cdcfe">document</span><span style="color:#d4d4d4">.</span><span style="color:#dcdcaa">createElement</span><span style="color:#ffd700">(</span><span style="color:#ce9178">"div"</span><span style="color:#d4d4d4">);</span></div>
<div style="position:absolute;left:108.0px;top:318px;width:2px;height:36px;background:rgba(255,255,255,0.13);"></div>
<div style="position:absolute;left:165.8px;top:318px;width:2px;height:36px;background:rgba(255,255,255,0.13);"></div>
<div style="position:absolute;left:223.6px;top:318px;width:2px;height:36px;background:rgba(255,255,255,0.13);"></div>
<div style="position:absolute;left:281.4px;top:318px;width:2px;height:36px;background:rgba(255,255,255,0.13);"></div>
<div style="position:absolute;left:339.2px;top:318px;width:2px;height:36px;background:rgba(255,255,255,0.13);"></div>
<div style="position:absolute;left:397.0px;top:318px;width:2px;height:36px;background:rgba(255,255,255,0.13);"></div>
<div style="position:absolute;left:20px;top:318px;width:60px;height:36px;line-height:36px;text-align:right;font-family:'Liberation Mono', monospace;font-size:24px;color:#6e7681;font-weight:400;white-space:pre;padding-top:2px;-webkit-text-stroke:0.3px;">138</div>
<div style="position:absolute;left:455.8px;top:318px;height:36px;line-height:36px;font-family:'Liberation Mono', monospace;font-size:24px;letter-spacing:0.048px;white-space:pre;padding-top:2px;-webkit-text-stroke:0.35px;"><span style="color:#9cdcfe">resultItem</span><span style="color:#d4d4d4">.</span><span style="color:#9cdcfe">classList</span><span style="color:#d4d4d4">.</span><span style="color:#dcdcaa">add</span><span style="color:#ffd700">(</span></div>
<div style="position:absolute;left:108.0px;top:354px;width:2px;height:36px;background:rgba(255,255,255,0.13);"></div>
<div style="position:absolute;left:165.8px;top:354px;width:2px;height:36px;background:rgba(255,255,255,0.13);"></div>
<div style="position:absolute;left:223.6px;top:354px;width:2px;height:36px;background:rgba(255,255,255,0.13);"></div>
<div style="position:absolute;left:281.4px;top:354px;width:2px;height:36px;background:rgba(255,255,255,0.13);"></div>
<div style="position:absolute;left:339.2px;top:354px;width:2px;height:36px;background:rgba(255,255,255,0.13);"></div>
<div style="position:absolute;left:397.0px;top:354px;width:2px;height:36px;background:rgba(255,255,255,0.13);"></div>
<div style="position:absolute;left:454.8px;top:354px;width:2px;height:36px;background:rgba(255,255,255,0.33);"></div>
<div style="position:absolute;left:20px;top:354px;width:60px;height:36px;line-height:36px;text-align:right;font-family:'Liberation Mono', monospace;font-size:24px;color:#6e7681;font-weight:400;white-space:pre;padding-top:2px;-webkit-text-stroke:0.3px;">139</div>
<div style="position:absolute;left:513.6px;top:354px;height:36px;line-height:36px;font-family:'Liberation Mono', monospace;font-size:24px;letter-spacing:0.048px;white-space:pre;padding-top:2px;-webkit-text-stroke:0.35px;"><span style="color:#ce9178">"search-result-item"</span><span style="color:#d4d4d4">,</span></div>
<div style="position:absolute;left:109px;top:390px;width:947px;height:36px;background:#3a3f2d;"></div>
<div style="position:absolute;left:542.5px;top:390px;width:947px;height:36px;background:#4f5b33;"></div>
<div style="position:absolute;left:109px;top:390px;width:947px;height:36px;border:4px solid rgba(255,255,255,0.045);"></div>
<div style="position:absolute;left:108.0px;top:390px;width:2px;height:36px;background:rgba(255,255,255,0.13);"></div>
<div style="position:absolute;left:165.8px;top:390px;width:2px;height:36px;background:rgba(255,255,255,0.13);"></div>
<div style="position:absolute;left:223.6px;top:390px;width:2px;height:36px;background:rgba(255,255,255,0.13);"></div>
<div style="position:absolute;left:281.4px;top:390px;width:2px;height:36px;background:rgba(255,255,255,0.13);"></div>
<div style="position:absolute;left:339.2px;top:390px;width:2px;height:36px;background:rgba(255,255,255,0.13);"></div>
<div style="position:absolute;left:397.0px;top:390px;width:2px;height:36px;background:rgba(255,255,255,0.13);"></div>
<div style="position:absolute;left:454.8px;top:390px;width:2px;height:36px;background:rgba(255,255,255,0.33);"></div>
<div style="position:absolute;left:20px;top:390px;width:60px;height:36px;line-height:36px;text-align:right;font-family:'Liberation Mono', monospace;font-size:24px;color:#e0e0e0;font-weight:700;white-space:pre;padding-top:2px;-webkit-text-stroke:0.3px;">140</div>
<div style="position:absolute;left:513.6px;top:390px;height:36px;line-height:36px;font-family:'Liberation Mono', monospace;font-size:24px;letter-spacing:0.048px;white-space:pre;padding-top:2px;-webkit-text-stroke:0.35px;"><span style="color:#ce9178">"px-[24px]"</span><span style="color:#d4d4d4">,</span></div>
<div style="position:absolute;left:109px;top:426px;width:947px;height:36px;background:#3a3f2d;"></div>
<div style="position:absolute;left:109px;top:426px;width:447.9px;height:36px;background:#4f5b33;"></div>
<div style="position:absolute;left:108.0px;top:426px;width:2px;height:36px;background:rgba(255,255,255,0.13);"></div>
<div style="position:absolute;left:165.8px;top:426px;width:2px;height:36px;background:rgba(255,255,255,0.13);"></div>
<div style="position:absolute;left:223.6px;top:426px;width:2px;height:36px;background:rgba(255,255,255,0.13);"></div>
<div style="position:absolute;left:281.4px;top:426px;width:2px;height:36px;background:rgba(255,255,255,0.13);"></div>
<div style="position:absolute;left:339.2px;top:426px;width:2px;height:36px;background:rgba(255,255,255,0.13);"></div>
<div style="position:absolute;left:397.0px;top:426px;width:2px;height:36px;background:rgba(255,255,255,0.13);"></div>
<div style="position:absolute;left:454.8px;top:426px;width:2px;height:36px;background:rgba(255,255,255,0.33);"></div>
<div style="position:absolute;left:20px;top:426px;width:60px;height:36px;line-height:36px;text-align:right;font-family:'Liberation Mono', monospace;font-size:24px;color:#6e7681;font-weight:400;white-space:pre;padding-top:2px;-webkit-text-stroke:0.3px;">141</div>
<div style="position:absolute;left:513.6px;top:426px;height:36px;line-height:36px;font-family:'Liberation Mono', monospace;font-size:24px;letter-spacing:0.048px;white-space:pre;padding-top:2px;-webkit-text-stroke:0.35px;"><span style="color:#ce9178">"py-2"</span><span style="color:#d4d4d4">,</span></div>
<div style="position:absolute;left:108.0px;top:462px;width:2px;height:36px;background:rgba(255,255,255,0.13);"></div>
<div style="position:absolute;left:165.8px;top:462px;width:2px;height:36px;background:rgba(255,255,255,0.13);"></div>
<div style="position:absolute;left:223.6px;top:462px;width:2px;height:36px;background:rgba(255,255,255,0.13);"></div>
<div style="position:absolute;left:281.4px;top:462px;width:2px;height:36px;background:rgba(255,255,255,0.13);"></div>
<div style="position:absolute;left:339.2px;top:462px;width:2px;height:36px;background:rgba(255,255,255,0.13);"></div>
<div style="position:absolute;left:397.0px;top:462px;width:2px;height:36px;background:rgba(255,255,255,0.13);"></div>
<div style="position:absolute;left:454.8px;top:462px;width:2px;height:36px;background:rgba(255,255,255,0.33);"></div>
<div style="position:absolute;left:20px;top:462px;width:60px;height:36px;line-height:36px;text-align:right;font-family:'Liberation Mono', monospace;font-size:24px;color:#6e7681;font-weight:400;white-space:pre;padding-top:2px;-webkit-text-stroke:0.3px;">142</div>
<div style="position:absolute;left:513.6px;top:462px;height:36px;line-height:36px;font-family:'Liberation Mono', monospace;font-size:24px;letter-spacing:0.048px;white-space:pre;padding-top:2px;-webkit-text-stroke:0.35px;"><span style="color:#ce9178">"hover:bg-gray-100"</span></div>
<div style="position:absolute;left:108.0px;top:498px;width:2px;height:36px;background:rgba(255,255,255,0.13);"></div>
<div style="position:absolute;left:165.8px;top:498px;width:2px;height:36px;background:rgba(255,255,255,0.13);"></div>
<div style="position:absolute;left:223.6px;top:498px;width:2px;height:36px;background:rgba(255,255,255,0.13);"></div>
<div style="position:absolute;left:281.4px;top:498px;width:2px;height:36px;background:rgba(255,255,255,0.13);"></div>
<div style="position:absolute;left:339.2px;top:498px;width:2px;height:36px;background:rgba(255,255,255,0.13);"></div>
<div style="position:absolute;left:397.0px;top:498px;width:2px;height:36px;background:rgba(255,255,255,0.13);"></div>
<div style="position:absolute;left:20px;top:498px;width:60px;height:36px;line-height:36px;text-align:right;font-family:'Liberation Mono', monospace;font-size:24px;color:#6e7681;font-weight:400;white-space:pre;padding-top:2px;-webkit-text-stroke:0.3px;">143</div>
<div style="position:absolute;left:455.8px;top:498px;height:36px;line-height:36px;font-family:'Liberation Mono', monospace;font-size:24px;letter-spacing:0.048px;white-space:pre;padding-top:2px;-webkit-text-stroke:0.35px;"><span style="color:#ffd700">)</span><span style="color:#d4d4d4">;</span></div>
<div style="position:absolute;left:108.0px;top:534px;width:2px;height:36px;background:rgba(255,255,255,0.13);"></div>
<div style="position:absolute;left:165.8px;top:534px;width:2px;height:36px;background:rgba(255,255,255,0.13);"></div>
<div style="position:absolute;left:223.6px;top:534px;width:2px;height:36px;background:rgba(255,255,255,0.13);"></div>
<div style="position:absolute;left:281.4px;top:534px;width:2px;height:36px;background:rgba(255,255,255,0.13);"></div>
<div style="position:absolute;left:339.2px;top:534px;width:2px;height:36px;background:rgba(255,255,255,0.13);"></div>
<div style="position:absolute;left:397.0px;top:534px;width:2px;height:36px;background:rgba(255,255,255,0.13);"></div>
<div style="position:absolute;left:20px;top:534px;width:60px;height:36px;line-height:36px;text-align:right;font-family:'Liberation Mono', monospace;font-size:24px;color:#6e7681;font-weight:400;white-space:pre;padding-top:2px;-webkit-text-stroke:0.3px;">144</div>
<div style="position:absolute;left:108.0px;top:570px;width:2px;height:36px;background:rgba(255,255,255,0.13);"></div>
<div style="position:absolute;left:165.8px;top:570px;width:2px;height:36px;background:rgba(255,255,255,0.13);"></div>
<div style="position:absolute;left:223.6px;top:570px;width:2px;height:36px;background:rgba(255,255,255,0.13);"></div>
<div style="position:absolute;left:281.4px;top:570px;width:2px;height:36px;background:rgba(255,255,255,0.13);"></div>
<div style="position:absolute;left:339.2px;top:570px;width:2px;height:36px;background:rgba(255,255,255,0.13);"></div>
<div style="position:absolute;left:397.0px;top:570px;width:2px;height:36px;background:rgba(255,255,255,0.13);"></div>
<div style="position:absolute;left:20px;top:570px;width:60px;height:36px;line-height:36px;text-align:right;font-family:'Liberation Mono', monospace;font-size:24px;color:#6e7681;font-weight:400;white-space:pre;padding-top:2px;-webkit-text-stroke:0.3px;">145</div>
<div style="position:absolute;left:455.8px;top:570px;height:36px;line-height:36px;font-family:'Liberation Mono', monospace;font-size:24px;letter-spacing:0.048px;white-space:pre;padding-top:2px;-webkit-text-stroke:0.35px;"><span style="color:#569cd6">let</span><span style="color:#d4d4d4"> </span><span style="color:#9cdcfe">productsHtml</span><span style="color:#d4d4d4"> = </span><span style="color:#ce9178">`&lt;a href="</span><span style="color:#ffd700">${</span><span style="color:#9cdcfe">product</span><span style="color:#d4d4d4">.</span><span style="color:#9cdcfe">link</span><span style="color:#ffd700">}</span><span style="color:#ce9178">"&gt;</span></div>
<div style="position:absolute;left:108.0px;top:606px;width:2px;height:36px;background:rgba(255,255,255,0.13);"></div>
<div style="position:absolute;left:165.8px;top:606px;width:2px;height:36px;background:rgba(255,255,255,0.13);"></div>
<div style="position:absolute;left:223.6px;top:606px;width:2px;height:36px;background:rgba(255,255,255,0.13);"></div>
<div style="position:absolute;left:281.4px;top:606px;width:2px;height:36px;background:rgba(255,255,255,0.13);"></div>
<div style="position:absolute;left:339.2px;top:606px;width:2px;height:36px;background:rgba(255,255,255,0.13);"></div>
<div style="position:absolute;left:397.0px;top:606px;width:2px;height:36px;background:rgba(255,255,255,0.13);"></div>
<div style="position:absolute;left:454.8px;top:606px;width:2px;height:36px;background:rgba(255,255,255,0.13);"></div>
<div style="position:absolute;left:20px;top:606px;width:60px;height:36px;line-height:36px;text-align:right;font-family:'Liberation Mono', monospace;font-size:24px;color:#6e7681;font-weight:400;white-space:pre;padding-top:2px;-webkit-text-stroke:0.3px;">146</div>
<div style="position:absolute;left:513.6px;top:606px;height:36px;line-height:36px;font-family:'Liberation Mono', monospace;font-size:24px;letter-spacing:0.048px;white-space:pre;padding-top:2px;-webkit-text-stroke:0.35px;"><span style="color:#ce9178">&lt;div class="flex gap-[8px] border-b </span><span style="color:#ce9178">  </span><span style="color:#ce9178">border-white p-2"&gt;</span></div>
<div style="position:absolute;left:108.0px;top:642px;width:2px;height:36px;background:rgba(255,255,255,0.13);"></div>
<div style="position:absolute;left:165.8px;top:642px;width:2px;height:36px;background:rgba(255,255,255,0.13);"></div>
<div style="position:absolute;left:223.6px;top:642px;width:2px;height:36px;background:rgba(255,255,255,0.13);"></div>
<div style="position:absolute;left:281.4px;top:642px;width:2px;height:36px;background:rgba(255,255,255,0.13);"></div>
<div style="position:absolute;left:339.2px;top:642px;width:2px;height:36px;background:rgba(255,255,255,0.13);"></div>
<div style="position:absolute;left:397.0px;top:642px;width:2px;height:36px;background:rgba(255,255,255,0.13);"></div>
<div style="position:absolute;left:454.8px;top:642px;width:2px;height:36px;background:rgba(255,255,255,0.13);"></div>
<div style="position:absolute;left:20px;top:642px;width:60px;height:36px;line-height:36px;text-align:right;font-family:'Liberation Mono', monospace;font-size:24px;color:#6e7681;font-weight:400;white-space:pre;padding-top:2px;-webkit-text-stroke:0.3px;">147</div>
<div style="position:absolute;left:108.0px;top:678px;width:2px;height:36px;background:rgba(255,255,255,0.13);"></div>
<div style="position:absolute;left:165.8px;top:678px;width:2px;height:36px;background:rgba(255,255,255,0.13);"></div>
<div style="position:absolute;left:223.6px;top:678px;width:2px;height:36px;background:rgba(255,255,255,0.13);"></div>
<div style="position:absolute;left:281.4px;top:678px;width:2px;height:36px;background:rgba(255,255,255,0.13);"></div>
<div style="position:absolute;left:339.2px;top:678px;width:2px;height:36px;background:rgba(255,255,255,0.13);"></div>
<div style="position:absolute;left:397.0px;top:678px;width:2px;height:36px;background:rgba(255,255,255,0.13);"></div>
<div style="position:absolute;left:20px;top:678px;width:60px;height:36px;line-height:36px;text-align:right;font-family:'Liberation Mono', monospace;font-size:24px;color:#6e7681;font-weight:400;white-space:pre;padding-top:2px;-webkit-text-stroke:0.3px;">148</div>
<div style="position:absolute;left:455.8px;top:678px;height:36px;line-height:36px;font-family:'Liberation Mono', monospace;font-size:24px;letter-spacing:0.048px;white-space:pre;padding-top:2px;-webkit-text-stroke:0.35px;"><span style="color:#c586c0">if</span><span style="color:#d4d4d4"> </span><span style="color:#ffd700">(</span><span style="color:#9cdcfe">product</span><span style="color:#d4d4d4">.</span><span style="color:#9cdcfe">discount</span><span style="color:#ffd700">)</span><span style="color:#d4d4d4"> </span><span style="color:#ffd700">{</span></div>
<div style="position:absolute;left:108.0px;top:714px;width:2px;height:36px;background:rgba(255,255,255,0.13);"></div>
<div style="position:absolute;left:165.8px;top:714px;width:2px;height:36px;background:rgba(255,255,255,0.13);"></div>
<div style="position:absolute;left:223.6px;top:714px;width:2px;height:36px;background:rgba(255,255,255,0.13);"></div>
<div style="position:absolute;left:281.4px;top:714px;width:2px;height:36px;background:rgba(255,255,255,0.13);"></div>
<div style="position:absolute;left:339.2px;top:714px;width:2px;height:36px;background:rgba(255,255,255,0.13);"></div>
<div style="position:absolute;left:397.0px;top:714px;width:2px;height:36px;background:rgba(255,255,255,0.13);"></div>
<div style="position:absolute;left:454.8px;top:714px;width:2px;height:36px;background:rgba(255,255,255,0.13);"></div>
<div style="position:absolute;left:20px;top:714px;width:60px;height:36px;line-height:36px;text-align:right;font-family:'Liberation Mono', monospace;font-size:24px;color:#6e7681;font-weight:400;white-space:pre;padding-top:2px;-webkit-text-stroke:0.3px;">149</div>
<div style="position:absolute;left:513.6px;top:714px;height:36px;line-height:36px;font-family:'Liberation Mono', monospace;font-size:24px;letter-spacing:0.048px;white-space:pre;padding-top:2px;-webkit-text-stroke:0.35px;"><span style="color:#9cdcfe">productsHtml</span><span style="color:#d4d4d4"> += </span><span style="color:#ce9178">`&lt;div class="absolute top-0 left-0"&gt;</span></div>
<div style="position:absolute;left:108.0px;top:750px;width:2px;height:36px;background:rgba(255,255,255,0.13);"></div>
<div style="position:absolute;left:165.8px;top:750px;width:2px;height:36px;background:rgba(255,255,255,0.13);"></div>
<div style="position:absolute;left:223.6px;top:750px;width:2px;height:36px;background:rgba(255,255,255,0.13);"></div>
<div style="position:absolute;left:281.4px;top:750px;width:2px;height:36px;background:rgba(255,255,255,0.13);"></div>
<div style="position:absolute;left:339.2px;top:750px;width:2px;height:36px;background:rgba(255,255,255,0.13);"></div>
<div style="position:absolute;left:397.0px;top:750px;width:2px;height:36px;background:rgba(255,255,255,0.13);"></div>
<div style="position:absolute;left:20px;top:750px;width:60px;height:36px;line-height:36px;text-align:right;font-family:'Liberation Mono', monospace;font-size:24px;color:#6e7681;font-weight:400;white-space:pre;padding-top:2px;-webkit-text-stroke:0.3px;">150</div>
<div style="position:absolute;left:455.8px;top:750px;height:36px;line-height:36px;font-family:'Liberation Mono', monospace;font-size:24px;letter-spacing:0.048px;white-space:pre;padding-top:2px;-webkit-text-stroke:0.35px;"><span style="color:#ffd700">}</span></div>
<div style="position:absolute;left:108.0px;top:786px;width:2px;height:36px;background:rgba(255,255,255,0.13);"></div>
<div style="position:absolute;left:165.8px;top:786px;width:2px;height:36px;background:rgba(255,255,255,0.13);"></div>
<div style="position:absolute;left:223.6px;top:786px;width:2px;height:36px;background:rgba(255,255,255,0.13);"></div>
<div style="position:absolute;left:281.4px;top:786px;width:2px;height:36px;background:rgba(255,255,255,0.13);"></div>
<div style="position:absolute;left:339.2px;top:786px;width:2px;height:36px;background:rgba(255,255,255,0.13);"></div>
<div style="position:absolute;left:397.0px;top:786px;width:2px;height:36px;background:rgba(255,255,255,0.13);"></div>
<div style="position:absolute;left:20px;top:786px;width:60px;height:36px;line-height:36px;text-align:right;font-family:'Liberation Mono', monospace;font-size:24px;color:#6e7681;font-weight:400;white-space:pre;padding-top:2px;-webkit-text-stroke:0.3px;">151</div>
<div style="position:absolute;left:108.0px;top:822px;width:2px;height:36px;background:rgba(255,255,255,0.13);"></div>
<div style="position:absolute;left:165.8px;top:822px;width:2px;height:36px;background:rgba(255,255,255,0.13);"></div>
<div style="position:absolute;left:223.6px;top:822px;width:2px;height:36px;background:rgba(255,255,255,0.13);"></div>
<div style="position:absolute;left:281.4px;top:822px;width:2px;height:36px;background:rgba(255,255,255,0.13);"></div>
<div style="position:absolute;left:339.2px;top:822px;width:2px;height:36px;background:rgba(255,255,255,0.13);"></div>
<div style="position:absolute;left:397.0px;top:822px;width:2px;height:36px;background:rgba(255,255,255,0.13);"></div>
<div style="position:absolute;left:20px;top:822px;width:60px;height:36px;line-height:36px;text-align:right;font-family:'Liberation Mono', monospace;font-size:24px;color:#6e7681;font-weight:400;white-space:pre;padding-top:2px;-webkit-text-stroke:0.3px;">152</div>
<div style="position:absolute;left:455.8px;top:822px;height:36px;line-height:36px;font-family:'Liberation Mono', monospace;font-size:24px;letter-spacing:0.048px;white-space:pre;padding-top:2px;-webkit-text-stroke:0.35px;"><span style="color:#9cdcfe">productsHtml</span><span style="color:#d4d4d4"> += </span><span style="color:#ce9178">`</span></div>
<div style="position:absolute;left:108.0px;top:858px;width:2px;height:36px;background:rgba(255,255,255,0.13);"></div>
<div style="position:absolute;left:165.8px;top:858px;width:2px;height:36px;background:rgba(255,255,255,0.13);"></div>
<div style="position:absolute;left:223.6px;top:858px;width:2px;height:36px;background:rgba(255,255,255,0.13);"></div>
<div style="position:absolute;left:281.4px;top:858px;width:2px;height:36px;background:rgba(255,255,255,0.13);"></div>
<div style="position:absolute;left:339.2px;top:858px;width:2px;height:36px;background:rgba(255,255,255,0.13);"></div>
<div style="position:absolute;left:397.0px;top:858px;width:2px;height:36px;background:rgba(255,255,255,0.13);"></div>
<div style="position:absolute;left:454.8px;top:858px;width:2px;height:36px;background:rgba(255,255,255,0.13);"></div>
<div style="position:absolute;left:20px;top:858px;width:60px;height:36px;line-height:36px;text-align:right;font-family:'Liberation Mono', monospace;font-size:24px;color:#6e7681;font-weight:400;white-space:pre;padding-top:2px;-webkit-text-stroke:0.3px;">153</div>
<div style="position:absolute;left:513.6px;top:858px;height:36px;line-height:36px;font-family:'Liberation Mono', monospace;font-size:24px;letter-spacing:0.048px;white-space:pre;padding-top:2px;-webkit-text-stroke:0.35px;"><span style="color:#ce9178">&lt;div class="w-[110px] mr-4 product-card-image"&gt;</span></div>
<div style="position:absolute;left:108.0px;top:894px;width:2px;height:36px;background:rgba(255,255,255,0.13);"></div>
<div style="position:absolute;left:165.8px;top:894px;width:2px;height:36px;background:rgba(255,255,255,0.13);"></div>
<div style="position:absolute;left:223.6px;top:894px;width:2px;height:36px;background:rgba(255,255,255,0.13);"></div>
<div style="position:absolute;left:281.4px;top:894px;width:2px;height:36px;background:rgba(255,255,255,0.13);"></div>
<div style="position:absolute;left:339.2px;top:894px;width:2px;height:36px;background:rgba(255,255,255,0.13);"></div>
<div style="position:absolute;left:397.0px;top:894px;width:2px;height:36px;background:rgba(255,255,255,0.13);"></div>
<div style="position:absolute;left:454.8px;top:894px;width:2px;height:36px;background:rgba(255,255,255,0.13);"></div>
<div style="position:absolute;left:20px;top:894px;width:60px;height:36px;line-height:36px;text-align:right;font-family:'Liberation Mono', monospace;font-size:24px;color:#6e7681;font-weight:400;white-space:pre;padding-top:2px;-webkit-text-stroke:0.3px;">154</div>
<div style="position:absolute;left:513.6px;top:894px;height:36px;line-height:36px;font-family:'Liberation Mono', monospace;font-size:24px;letter-spacing:0.048px;white-space:pre;padding-top:2px;-webkit-text-stroke:0.35px;"><span style="color:#ce9178">&lt;div class="flex flex-col gap-[8px]"&gt;</span></div>
<div style="position:absolute;left:108.0px;top:930px;width:2px;height:36px;background:rgba(255,255,255,0.13);"></div>
<div style="position:absolute;left:165.8px;top:930px;width:2px;height:36px;background:rgba(255,255,255,0.13);"></div>
<div style="position:absolute;left:223.6px;top:930px;width:2px;height:36px;background:rgba(255,255,255,0.13);"></div>
<div style="position:absolute;left:281.4px;top:930px;width:2px;height:36px;background:rgba(255,255,255,0.13);"></div>
<div style="position:absolute;left:339.2px;top:930px;width:2px;height:36px;background:rgba(255,255,255,0.13);"></div>
<div style="position:absolute;left:397.0px;top:930px;width:2px;height:36px;background:rgba(255,255,255,0.13);"></div>
<div style="position:absolute;left:454.8px;top:930px;width:2px;height:36px;background:rgba(255,255,255,0.13);"></div>
<div style="position:absolute;left:512.6px;top:930px;width:2px;height:36px;background:rgba(255,255,255,0.13);"></div>
<div style="position:absolute;left:20px;top:930px;width:60px;height:36px;line-height:36px;text-align:right;font-family:'Liberation Mono', monospace;font-size:24px;color:#6e7681;font-weight:400;white-space:pre;padding-top:2px;-webkit-text-stroke:0.3px;">155</div>
<div style="position:absolute;left:571.4px;top:930px;height:36px;line-height:36px;font-family:'Liberation Mono', monospace;font-size:24px;letter-spacing:0.048px;white-space:pre;padding-top:2px;-webkit-text-stroke:0.35px;"><span style="color:#ce9178">&lt;div class="font-noto-display-semibold"&gt;</span></div>
<div style="position:absolute;left:108.0px;top:966px;width:2px;height:36px;background:rgba(255,255,255,0.13);"></div>
<div style="position:absolute;left:165.8px;top:966px;width:2px;height:36px;background:rgba(255,255,255,0.13);"></div>
<div style="position:absolute;left:223.6px;top:966px;width:2px;height:36px;background:rgba(255,255,255,0.13);"></div>
<div style="position:absolute;left:281.4px;top:966px;width:2px;height:36px;background:rgba(255,255,255,0.13);"></div>
<div style="position:absolute;left:339.2px;top:966px;width:2px;height:36px;background:rgba(255,255,255,0.13);"></div>
<div style="position:absolute;left:397.0px;top:966px;width:2px;height:36px;background:rgba(255,255,255,0.13);"></div>
<div style="position:absolute;left:454.8px;top:966px;width:2px;height:36px;background:rgba(255,255,255,0.13);"></div>
<div style="position:absolute;left:512.6px;top:966px;width:2px;height:36px;background:rgba(255,255,255,0.13);"></div>
<div style="position:absolute;left:20px;top:966px;width:60px;height:36px;line-height:36px;text-align:right;font-family:'Liberation Mono', monospace;font-size:24px;color:#6e7681;font-weight:400;white-space:pre;padding-top:2px;-webkit-text-stroke:0.3px;">156</div>
<div style="position:absolute;left:571.4px;top:966px;height:36px;line-height:36px;font-family:'Liberation Mono', monospace;font-size:24px;letter-spacing:0.048px;white-space:pre;padding-top:2px;-webkit-text-stroke:0.35px;"><span style="color:#ce9178">&lt;div class="flex items-center gap-[4px]"&gt;</span></div>
<div style="position:absolute;left:108.0px;top:1002px;width:2px;height:36px;background:rgba(255,255,255,0.13);"></div>
<div style="position:absolute;left:165.8px;top:1002px;width:2px;height:36px;background:rgba(255,255,255,0.13);"></div>
<div style="position:absolute;left:223.6px;top:1002px;width:2px;height:36px;background:rgba(255,255,255,0.13);"></div>
<div style="position:absolute;left:281.4px;top:1002px;width:2px;height:36px;background:rgba(255,255,255,0.13);"></div>
<div style="position:absolute;left:339.2px;top:1002px;width:2px;height:36px;background:rgba(255,255,255,0.13);"></div>
<div style="position:absolute;left:397.0px;top:1002px;width:2px;height:36px;background:rgba(255,255,255,0.13);"></div>
<div style="position:absolute;left:454.8px;top:1002px;width:2px;height:36px;background:rgba(255,255,255,0.13);"></div>
<div style="position:absolute;left:512.6px;top:1002px;width:2px;height:36px;background:rgba(255,255,255,0.13);"></div>
<div style="position:absolute;left:570.4px;top:1002px;width:2px;height:36px;background:rgba(255,255,255,0.13);"></div>
<div style="position:absolute;left:20px;top:1002px;width:60px;height:36px;line-height:36px;text-align:right;font-family:'Liberation Mono', monospace;font-size:24px;color:#6e7681;font-weight:400;white-space:pre;padding-top:2px;-webkit-text-stroke:0.3px;">157</div>
<div style="position:absolute;left:629.2px;top:1002px;height:36px;line-height:36px;font-family:'Liberation Mono', monospace;font-size:24px;letter-spacing:0.048px;white-space:pre;padding-top:2px;-webkit-text-stroke:0.35px;"><span style="color:#ce9178">&lt;div&gt;&lt;span class="font-noto-display"&gt;</span></div>
<div style="position:absolute;left:108.0px;top:1038px;width:2px;height:36px;background:rgba(255,255,255,0.13);"></div>
<div style="position:absolute;left:165.8px;top:1038px;width:2px;height:36px;background:rgba(255,255,255,0.13);"></div>
<div style="position:absolute;left:223.6px;top:1038px;width:2px;height:36px;background:rgba(255,255,255,0.13);"></div>
<div style="position:absolute;left:281.4px;top:1038px;width:2px;height:36px;background:rgba(255,255,255,0.13);"></div>
<div style="position:absolute;left:339.2px;top:1038px;width:2px;height:36px;background:rgba(255,255,255,0.13);"></div>
<div style="position:absolute;left:397.0px;top:1038px;width:2px;height:36px;background:rgba(255,255,255,0.13);"></div>
<div style="position:absolute;left:454.8px;top:1038px;width:2px;height:36px;background:rgba(255,255,255,0.13);"></div>
<div style="position:absolute;left:20px;top:1038px;width:60px;height:36px;line-height:36px;text-align:right;font-family:'Liberation Mono', monospace;font-size:24px;color:#6e7681;font-weight:400;white-space:pre;padding-top:2px;-webkit-text-stroke:0.3px;">158</div>
<div style="position:absolute;left:108.0px;top:1074px;width:2px;height:36px;background:rgba(255,255,255,0.13);"></div>
<div style="position:absolute;left:165.8px;top:1074px;width:2px;height:36px;background:rgba(255,255,255,0.13);"></div>
<div style="position:absolute;left:223.6px;top:1074px;width:2px;height:36px;background:rgba(255,255,255,0.13);"></div>
<div style="position:absolute;left:281.4px;top:1074px;width:2px;height:36px;background:rgba(255,255,255,0.13);"></div>
<div style="position:absolute;left:339.2px;top:1074px;width:2px;height:36px;background:rgba(255,255,255,0.13);"></div>
<div style="position:absolute;left:397.0px;top:1074px;width:2px;height:36px;background:rgba(255,255,255,0.13);"></div>
<div style="position:absolute;left:20px;top:1074px;width:60px;height:36px;line-height:36px;text-align:right;font-family:'Liberation Mono', monospace;font-size:24px;color:#6e7681;font-weight:400;white-space:pre;padding-top:2px;-webkit-text-stroke:0.3px;">159</div>
<div style="position:absolute;left:455.8px;top:1074px;height:36px;line-height:36px;font-family:'Liberation Mono', monospace;font-size:24px;letter-spacing:0.048px;white-space:pre;padding-top:2px;-webkit-text-stroke:0.35px;"><span style="color:#c586c0">if</span><span style="color:#d4d4d4"> </span><span style="color:#ffd700">(</span><span style="color:#9cdcfe">product</span><span style="color:#d4d4d4">.</span><span style="color:#9cdcfe">discount</span><span style="color:#ffd700">)</span><span style="color:#d4d4d4"> </span><span style="color:#ffd700">{</span></div>
<div style="position:absolute;left:108.0px;top:1110px;width:2px;height:36px;background:rgba(255,255,255,0.13);"></div>
<div style="position:absolute;left:165.8px;top:1110px;width:2px;height:36px;background:rgba(255,255,255,0.13);"></div>
<div style="position:absolute;left:223.6px;top:1110px;width:2px;height:36px;background:rgba(255,255,255,0.13);"></div>
<div style="position:absolute;left:281.4px;top:1110px;width:2px;height:36px;background:rgba(255,255,255,0.13);"></div>
<div style="position:absolute;left:339.2px;top:1110px;width:2px;height:36px;background:rgba(255,255,255,0.13);"></div>
<div style="position:absolute;left:397.0px;top:1110px;width:2px;height:36px;background:rgba(255,255,255,0.13);"></div>
<div style="position:absolute;left:454.8px;top:1110px;width:2px;height:36px;background:rgba(255,255,255,0.13);"></div>
<div style="position:absolute;left:20px;top:1110px;width:60px;height:36px;line-height:36px;text-align:right;font-family:'Liberation Mono', monospace;font-size:24px;color:#6e7681;font-weight:400;white-space:pre;padding-top:2px;-webkit-text-stroke:0.3px;">160</div>
<div style="position:absolute;left:513.6px;top:1110px;height:36px;line-height:36px;font-family:'Liberation Mono', monospace;font-size:24px;letter-spacing:0.048px;white-space:pre;padding-top:2px;-webkit-text-stroke:0.35px;"><span style="color:#9cdcfe">productsHtml</span><span style="color:#d4d4d4"> += </span><span style="color:#ce9178">`</span></div>
<div style="position:absolute;left:108.0px;top:1146px;width:2px;height:36px;background:rgba(255,255,255,0.13);"></div>
<div style="position:absolute;left:165.8px;top:1146px;width:2px;height:36px;background:rgba(255,255,255,0.13);"></div>
<div style="position:absolute;left:223.6px;top:1146px;width:2px;height:36px;background:rgba(255,255,255,0.13);"></div>
<div style="position:absolute;left:281.4px;top:1146px;width:2px;height:36px;background:rgba(255,255,255,0.13);"></div>
<div style="position:absolute;left:339.2px;top:1146px;width:2px;height:36px;background:rgba(255,255,255,0.13);"></div>
<div style="position:absolute;left:397.0px;top:1146px;width:2px;height:36px;background:rgba(255,255,255,0.13);"></div>
<div style="position:absolute;left:454.8px;top:1146px;width:2px;height:36px;background:rgba(255,255,255,0.13);"></div>
<div style="position:absolute;left:512.6px;top:1146px;width:2px;height:36px;background:rgba(255,255,255,0.13);"></div>
<div style="position:absolute;left:570.4px;top:1146px;width:2px;height:36px;background:rgba(255,255,255,0.13);"></div>
<div style="position:absolute;left:20px;top:1146px;width:60px;height:36px;line-height:36px;text-align:right;font-family:'Liberation Mono', monospace;font-size:24px;color:#6e7681;font-weight:400;white-space:pre;padding-top:2px;-webkit-text-stroke:0.3px;">161</div>
<div style="position:absolute;left:629.2px;top:1146px;height:36px;line-height:36px;font-family:'Liberation Mono', monospace;font-size:24px;letter-spacing:0.048px;white-space:pre;padding-top:2px;-webkit-text-stroke:0.35px;"><span style="color:#ce9178">&lt;div class="flex items-center gap-[4px]"&gt;</span></div>
</div>
<div style="position:absolute;left:780px;top:547px;width:18px;height:2px;background:#8b8b8b;"></div>
<div style="position:absolute;left:1833px;top:547px;width:18px;height:2px;background:#b8b8b8;"></div>
<div style="position:absolute;left:1841px;top:539px;width:2px;height:18px;background:#b8b8b8;"></div>
<div style="position:absolute;left:1833px;top:583px;width:18px;height:2px;background:#b8b8b8;"></div>
<div style="position:absolute;left:1841px;top:575px;width:2px;height:18px;background:#b8b8b8;"></div>
<svg style="position:absolute;left:1754px;top:536px" width="28" height="24" viewBox="0 0 28 24"><path d="M2 12 H25 M15 3 L25 12 L15 21" fill="none" stroke="#e8e8e8" stroke-width="2.2" stroke-linecap="round" stroke-linejoin="round"/></svg>
<div style="position:absolute;left:699px;top:140px;width:2109px;height:8px;background:linear-gradient(rgba(0,0,0,0.45),rgba(0,0,0,0));"></div>
<div style="position:absolute;left:1752px;top:140px;width:8px;height:1167px;background:linear-gradient(90deg,rgba(0,0,0,0.45),rgba(0,0,0,0));"></div>
<div style="position:absolute;left:2206px;top:279px;width:102px;height:35px;background:rgba(80,120,170,0.16);"></div>
<div style="position:absolute;left:2206px;top:223px;width:511px;height:53px;background:#202020;border:2px solid #454545;border-radius:6px;"></div>
<div style="position:absolute;left:2224px;top:233px;height:36px;line-height:36px;font-family:'Liberation Mono', monospace;font-size:24px;letter-spacing:0.048px;white-space:pre;-webkit-text-stroke:0.35px;"><span style="color:#569cd6">const</span><span style="color:#d4d4d4"> </span><span style="color:#4fc1ff">wrapper</span><span style="color:#d4d4d4">: </span><span style="color:#4ec9b0">HTMLElement</span><span style="color:#d4d4d4"> | </span><span style="color:#4ec9b0">null</span></div>
<div style="position:absolute;left:2790px;top:753px;width:18px;height:19px;background:#e8e8e8;border:1px solid #999;"></div>
<div style="position:absolute;left:2780px;top:140px;width:1px;height:1167px;background:#0c0c0c;"></div>
<div style="position:absolute;left:2781px;top:520px;width:69px;height:94px;background:#424242;"></div>
<div style="position:absolute;left:2781px;top:530px;width:27px;height:36px;background:#646e53;"></div>
<div style="position:absolute;left:2781px;top:566px;width:27px;height:36px;background:#54574a;"></div>
<div style="position:absolute;left:2781px;top:548px;width:27px;height:4px;background:#94968f;"></div>
<div style="position:absolute;left:2808px;top:547px;width:30px;height:8px;background:#744646;"></div>
<div style="position:absolute;left:2838px;top:549px;width:12px;height:8px;background:#637250;"></div>
<div style="position:absolute;left:1861px;top:1282px;width:247px;height:25px;background:rgba(121,121,121,0.4);"></div>
<div style="position:absolute;left:699px;top:1307px;width:2151px;height:2px;background:#2b2b2b;"></div>
<div style="position:absolute;left:699px;top:1309px;width:2151px;height:403px;background:#181818;"></div>
<div style="position:absolute;left:739px;top:1330.37px;height:26px;line-height:26px;font-family:'Liberation Sans', sans-serif;font-size:22px;color:#9d9d9d;font-weight:400;white-space:pre;-webkit-text-stroke:0.25px;letter-spacing:0.4px;">ПРОБЛЕМЫ</div>
<div style="position:absolute;left:889px;top:1325px;width:36px;height:36px;border-radius:18px;background:#616161;"></div>
<div style="position:absolute;left:900px;top:1330.37px;height:26px;line-height:26px;font-family:'Liberation Sans', sans-serif;font-size:22px;color:#ffffff;font-weight:400;white-space:pre;-webkit-text-stroke:0.25px;">5</div>
<div style="position:absolute;left:969px;top:1330.37px;height:26px;line-height:26px;font-family:'Liberation Sans', sans-serif;font-size:22px;color:#9d9d9d;font-weight:400;white-space:pre;-webkit-text-stroke:0.25px;letter-spacing:0.4px;">ВЫХОДНЫЕ ДАННЫЕ</div>
<div style="position:absolute;left:1254px;top:1330.37px;height:26px;line-height:26px;font-family:'Liberation Sans', sans-serif;font-size:22px;color:#9d9d9d;font-weight:400;white-space:pre;-webkit-text-stroke:0.25px;letter-spacing:0.4px;">КОНСОЛЬ ОТЛАДКИ</div>
<div style="position:absolute;left:1527px;top:1330.37px;height:26px;line-height:26px;font-family:'Liberation Sans', sans-serif;font-size:22px;color:#e7e7e7;font-weight:400;white-space:pre;-webkit-text-stroke:0.25px;letter-spacing:0.4px;">ТЕРМИНАЛ</div>
<div style="position:absolute;left:1523px;top:1367px;width:135px;height:2px;background:#3277d0;"></div>
<div style="position:absolute;left:1701px;top:1330.37px;height:26px;line-height:26px;font-family:'Liberation Sans', sans-serif;font-size:22px;color:#9d9d9d;font-weight:400;white-space:pre;-webkit-text-stroke:0.25px;letter-spacing:0.4px;">ПОРТЫ</div>
<div style="position:absolute;left:1831px;top:1330.37px;height:26px;line-height:26px;font-family:'Liberation Sans', sans-serif;font-size:22px;color:#9d9d9d;font-weight:400;white-space:pre;-webkit-text-stroke:0.25px;letter-spacing:0.4px;">КОММЕНТАРИИ</div>
<svg style="position:absolute;left:2624px;top:1327px;" width="30" height="30" viewBox="0 0 30 30"><path d="M15 2 V28 M2 15 H28" fill="none" stroke="#cccccc" stroke-width="2.2" stroke-linejoin="round" stroke-linecap="round" /></svg>
<svg style="position:absolute;left:2662px;top:1336px;" width="22" height="14" viewBox="0 0 22 14"><path d="M3 3 L11 10 L19 3" fill="none" stroke="#cccccc" stroke-width="2" stroke-linejoin="round" stroke-linecap="round" /></svg>
<div style="position:absolute;left:2705px;top:1340px;width:26px;height:5px;"><div style="position:absolute;left:0px;top:0;width:5px;height:5px;border-radius:3px;background:#cccccc"></div><div style="position:absolute;left:10px;top:0;width:5px;height:5px;border-radius:3px;background:#cccccc"></div><div style="position:absolute;left:20px;top:0;width:5px;height:5px;border-radius:3px;background:#cccccc"></div></div>
<svg style="position:absolute;left:2757px;top:1332px;" width="28" height="18" viewBox="0 0 28 18"><path d="M3 14 L14 3 L25 14" fill="none" stroke="#cccccc" stroke-width="2.2" stroke-linejoin="round" stroke-linecap="round" /></svg>
<svg style="position:absolute;left:2810px;top:1330px;" width="24" height="24" viewBox="0 0 24 24"><path d="M3 3 L21 21 M21 3 L3 21" fill="none" stroke="#cccccc" stroke-width="2.2" stroke-linejoin="round" stroke-linecap="round" /></svg>
<div style="position:absolute;left:2628px;top:1376px;width:2px;height:336px;background:#2b2b2b;"></div>
<div style="position:absolute;left:2630px;top:1376px;width:220px;height:44px;background:#37373d;"></div>
<div style="position:absolute;left:2630px;top:1376px;width:2px;height:44px;background:#3277d0;"></div>
<svg style="position:absolute;left:2650px;top:1381px;" width="32" height="32" viewBox="0 0 32 32"><path d="M3 3 h26 v26 h-26 z" fill="none" stroke="#cccccc" stroke-width="2" stroke-linejoin="round" stroke-linecap="round" /><path d="M8 10 L14 16 L8 22 M16 23 H24" fill="none" stroke="#cccccc" stroke-width="2" stroke-linejoin="round" stroke-linecap="round" /></svg>
<div style="position:absolute;left:2690px;top:1382.64px;height:32px;line-height:32px;font-family:'Liberation Sans', sans-serif;font-size:27px;color:#e0e0e0;font-weight:400;white-space:pre;-webkit-text-stroke:0.25px;">php</div>
<svg style="position:absolute;left:2650px;top:1425px;" width="32" height="32" viewBox="0 0 32 32"><path d="M3 3 h26 v26 h-26 z" fill="none" stroke="#cccccc" stroke-width="2" stroke-linejoin="round" stroke-linecap="round" /><path d="M8 10 L14 16 L8 22 M16 23 H24" fill="none" stroke="#cccccc" stroke-width="2" stroke-linejoin="round" stroke-linecap="round" /></svg>
<div style="position:absolute;left:2690px;top:1426.64px;height:32px;line-height:32px;font-family:'Liberation Sans', sans-serif;font-size:27px;color:#e0e0e0;font-weight:400;white-space:pre;-webkit-text-stroke:0.25px;">node</div>
<div style="position:absolute;left:2606px;top:1400px;width:7px;height:7px;background:#6a6a6a;"></div>
<div style="position:absolute;left:765px;top:1401px;height:28px;line-height:28px;font-family:'Liberation Mono', monospace;font-size:24px;letter-spacing:-0.402px;color:#d0d0d0;white-space:pre;-webkit-text-stroke:0.3px;"><span style="color:#8f8f8f">2026-01-13</span> 13:16:18 /storage/thumbs/uploads/products/2E-GC-HIB-BK/6821ca6506b8c_300x300.webp <span style="color:#8f8f8f">                          ~ 0.30ms</span></div>
<div style="position:absolute;left:2071.5px;top:1417px;width:350.0px;height:5px;background:linear-gradient(90deg,#8f8f8f 5px,transparent 5px);background-size:14.0px 5px;background-repeat:repeat-x;"></div>
<div style="position:absolute;left:765px;top:1429px;height:28px;line-height:28px;font-family:'Liberation Mono', monospace;font-size:24px;letter-spacing:-0.402px;color:#d0d0d0;white-space:pre;-webkit-text-stroke:0.3px;"><span style="color:#8f8f8f">2026-01-13</span> 13:16:18 /storage/thumbs/uploads/products/9J4C1AA/6821c9cbd4a32_300x300.webp <span style="color:#8f8f8f">                               ~ 7.90ms</span></div>
<div style="position:absolute;left:2001.5px;top:1445px;width:420.0px;height:5px;background:linear-gradient(90deg,#8f8f8f 5px,transparent 5px);background-size:14.0px 5px;background-repeat:repeat-x;"></div>
<div style="position:absolute;left:765px;top:1457px;height:28px;line-height:28px;font-family:'Liberation Mono', monospace;font-size:24px;letter-spacing:-0.402px;color:#d0d0d0;white-space:pre;-webkit-text-stroke:0.3px;"><span style="color:#8f8f8f">2026-01-13</span> 13:16:33 /storage/thumbs/uploads/products/BKBZ17-AGS-BK/6821c9653ca4b_300x300.webp <span style="color:#8f8f8f">                             ~ 6s</span></div>
<div style="position:absolute;left:2085.5px;top:1473px;width:392.0px;height:5px;background:linear-gradient(90deg,#8f8f8f 5px,transparent 5px);background-size:14.0px 5px;background-repeat:repeat-x;"></div>
<div style="position:absolute;left:765px;top:1485px;height:28px;line-height:28px;font-family:'Liberation Mono', monospace;font-size:24px;letter-spacing:-0.402px;color:#d0d0d0;white-space:pre;-webkit-text-stroke:0.3px;"><span style="color:#8f8f8f">2026-01-13</span> 13:16:39 /storage/thumbs/uploads/products/BKBIN15-AGS-AX/6821c95b5585e_300x300.webp <span style="color:#8f8f8f">                        ~ 9.20ms</span></div>
<div style="position:absolute;left:2099.5px;top:1501px;width:322.0px;height:5px;background:linear-gradient(90deg,#8f8f8f 5px,transparent 5px);background-size:14.0px 5px;background-repeat:repeat-x;"></div>
<div style="position:absolute;left:765px;top:1513px;height:28px;line-height:28px;font-family:'Liberation Mono', monospace;font-size:24px;letter-spacing:-0.402px;color:#d0d0d0;white-space:pre;-webkit-text-stroke:0.3px;"><span style="color:#8f8f8f">2026-01-13</span> 13:16:39 /storage/thumbs/uploads/products/BKBIN15-AGS-B/6821c95f880c3_300x300.webp <span style="color:#8f8f8f">                        ~ 12.29ms</span></div>
<div style="position:absolute;left:2085.5px;top:1529px;width:322.0px;height:5px;background:linear-gradient(90deg,#8f8f8f 5px,transparent 5px);background-size:14.0px 5px;background-repeat:repeat-x;"></div>
<div style="position:absolute;left:765px;top:1541px;height:28px;line-height:28px;font-family:'Liberation Mono', monospace;font-size:24px;letter-spacing:-0.402px;color:#d0d0d0;white-space:pre;-webkit-text-stroke:0.3px;"><span style="color:#8f8f8f">2026-01-13</span> 13:16:39 /storage/thumbs/uploads/products/BKGOM15-BK/6821c968b7ff7_300x300.webp <span style="color:#8f8f8f">                           ~ 15.40ms</span></div>
<div style="position:absolute;left:2043.5px;top:1557px;width:364.0px;height:5px;background:linear-gradient(90deg,#8f8f8f 5px,transparent 5px);background-size:14.0px 5px;background-repeat:repeat-x;"></div>
<div style="position:absolute;left:765px;top:1569px;height:28px;line-height:28px;font-family:'Liberation Mono', monospace;font-size:24px;letter-spacing:-0.402px;color:#d0d0d0;white-space:pre;-webkit-text-stroke:0.3px;"><span style="color:#8f8f8f">2026-01-13</span> 13:16:39 /storage/thumbs/uploads/products/BMDOKSP-BK/6821c985bef2f_300x300.webp <span style="color:#8f8f8f">                            ~ 0.16ms</span></div>
<div style="position:absolute;left:2043.5px;top:1585px;width:378.0px;height:5px;background:linear-gradient(90deg,#8f8f8f 5px,transparent 5px);background-size:14.0px 5px;background-repeat:repeat-x;"></div>
<div style="position:absolute;left:765px;top:1597px;height:28px;line-height:28px;font-family:'Liberation Mono', monospace;font-size:24px;letter-spacing:-0.402px;color:#d0d0d0;white-space:pre;-webkit-text-stroke:0.3px;"><span style="color:#8f8f8f">2026-01-13</span> 13:16:39 /storage/thumbs/uploads/products/2E-GC-BUS-BKRD/6821c9f47cd69_300x300.webp <span style="color:#8f8f8f">                        ~ 4.34ms</span></div>
<div style="position:absolute;left:2099.5px;top:1613px;width:322.0px;height:5px;background:linear-gradient(90deg,#8f8f8f 5px,transparent 5px);background-size:14.0px 5px;background-repeat:repeat-x;"></div>
<div style="position:absolute;left:765px;top:1625px;height:28px;line-height:28px;font-family:'Liberation Mono', monospace;font-size:24px;letter-spacing:-0.402px;color:#d0d0d0;white-space:pre;-webkit-text-stroke:0.3px;"><span style="color:#8f8f8f">2026-01-13</span> 13:16:39 /storage/thumbs/uploads/products/BKTUG-M-B/6821c6d1f3145_300x300.webp <span style="color:#8f8f8f">                             ~ 7.84ms</span></div>
<div style="position:absolute;left:2029.5px;top:1641px;width:392.0px;height:5px;background:linear-gradient(90deg,#8f8f8f 5px,transparent 5px);background-size:14.0px 5px;background-repeat:repeat-x;"></div>
<div style="position:absolute;left:765px;top:1653px;height:28px;line-height:28px;font-family:'Liberation Mono', monospace;font-size:24px;letter-spacing:-0.402px;color:#d0d0d0;white-space:pre;-webkit-text-stroke:0.3px;"><span style="color:#8f8f8f">2026-01-13</span> 13:16:40 /storage/thumbs/uploads/products/2E-GC-BUS-BK/6821c9dc2267c_300x300.webp <span style="color:#8f8f8f">                          ~ 0.20ms</span></div>
<div style="position:absolute;left:2071.5px;top:1669px;width:350.0px;height:5px;background:linear-gradient(90deg,#8f8f8f 5px,transparent 5px);background-size:14.0px 5px;background-repeat:repeat-x;"></div>
<div style="position:absolute;left:738px;top:1680px;width:15px;height:28px;background:transparent;border:2px solid #d8d8d8;"></div>
<div style="position:absolute;left:0px;top:1712px;width:2850px;height:2px;background:#2b2b2b;"></div>
</div></body></html>
